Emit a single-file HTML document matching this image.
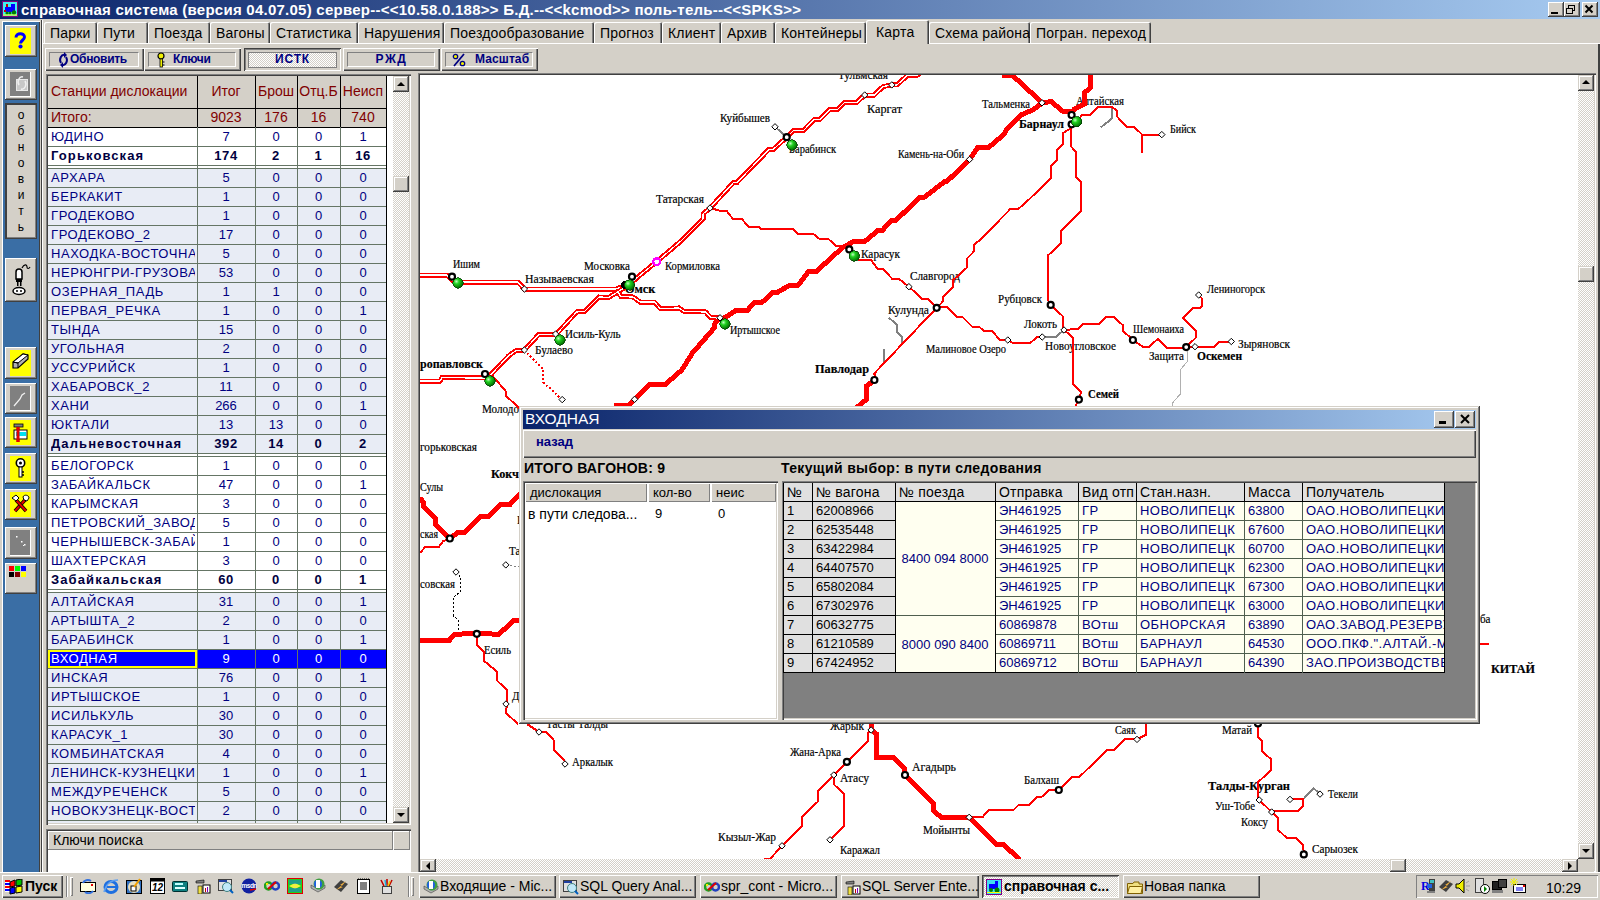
<!DOCTYPE html><html><head><meta charset="utf-8"><style>
html,body{margin:0;padding:0;width:1600px;height:900px;overflow:hidden;background:#D4D0C8;position:relative;font-family:"Liberation Sans",sans-serif;}
div{box-sizing:border-box;}
.t{position:absolute;white-space:nowrap;}
</style></head><body>
<div style="position:absolute;left:0;top:0;width:1600px;height:19px;background:linear-gradient(to right,#0A246A 0%,#A6CAF0 100%);"></div>
<svg style="position:absolute;left:2px;top:1px" width="16" height="16"><rect x="0.5" y="0.5" width="15" height="15" fill="#40F0F0" stroke="#800080"/><rect x="3" y="6" width="8" height="5" fill="#0000FF"/><rect x="9" y="3" width="4" height="8" fill="#0000FF"/><rect x="4" y="3" width="2" height="3" fill="#C00000"/><rect x="2" y="9" width="2" height="2" fill="#C00000"/><circle cx="5" cy="12" r="1.6" fill="#008000"/><circle cx="8" cy="12" r="1.6" fill="#008000"/><circle cx="12" cy="11.5" r="2.2" fill="#008000"/><rect x="1" y="13.5" width="14" height="1" fill="#FFFF00"/></svg>
<div style="position:absolute;left:21px;top:1px;font:bold 15px/17px 'Liberation Sans', sans-serif;color:#FFFFFF;white-space:nowrap;line-height:17px;letter-spacing:0.25px;">справочная система (версия 04.07.05) сервер--&lt;&lt;10.58.0.188&gt;&gt; Б.Д.--&lt;&lt;kcmod&gt;&gt; поль-тель--&lt;&lt;SPKS&gt;&gt;</div>
<div style="position:absolute;left:1548px;top:2px;width:16px;height:15px;background:#D4D0C8;box-shadow:inset -1px -1px #404040, inset 1px 1px #FFFFFF, inset -2px -2px #808080, inset 2px 2px #D4D0C8;"></div>
<div style="position:absolute;left:1564px;top:2px;width:16px;height:15px;background:#D4D0C8;box-shadow:inset -1px -1px #404040, inset 1px 1px #FFFFFF, inset -2px -2px #808080, inset 2px 2px #D4D0C8;"></div>
<div style="position:absolute;left:1582px;top:2px;width:16px;height:15px;background:#D4D0C8;box-shadow:inset -1px -1px #404040, inset 1px 1px #FFFFFF, inset -2px -2px #808080, inset 2px 2px #D4D0C8;"></div>
<svg style="position:absolute;left:1548px;top:2px" width="50" height="15"><rect x="3" y="10" width="7" height="2" fill="#000"/><rect x="20.5" y="3.5" width="6" height="5" fill="none" stroke="#000"/><rect x="20" y="3" width="7" height="1" fill="#000"/><rect x="18.5" y="6.5" width="6" height="5" fill="#D4D0C8" stroke="#000"/><rect x="18" y="6" width="7" height="1" fill="#000"/><path d="M37.5 3.5 L44.5 10.5 M44.5 3.5 L37.5 10.5" stroke="#000" stroke-width="2"/></svg>
<div style="position:absolute;left:0;top:19px;width:1600px;height:1px;background:#D4D0C8"></div>
<div style="position:absolute;left:0;top:20px;width:41px;height:852px;background:#D4D0C8;"></div>
<div style="position:absolute;left:3px;top:22px;width:36px;height:850px;background:#3A6EA5;"></div>
<div style="position:absolute;left:2px;top:21px;width:38px;height:851px;box-shadow:inset 1px 1px #FFFFFF,inset -1px 0 #404040;"></div>
<div style="position:absolute;left:41px;top:20px;width:1px;height:852px;background:#404040;"></div>
<div style="position:absolute;left:42px;top:20px;width:1px;height:852px;background:#FFFFFF;"></div>
<div style="position:absolute;left:5px;top:25px;width:32px;height:32px;background:#D4D0C8;box-shadow:inset -1px -1px #404040, inset 1px 1px #FFFFFF, inset -2px -2px #808080, inset 2px 2px #D4D0C8;"></div>
<div style="position:absolute;left:10px;top:28px;width:21px;height:26px;background:#FFFF00;"></div>
<svg style="position:absolute;left:10px;top:28px" width="22" height="26"><path d="M6 9.5 C6 4.5 14.5 4.5 14.5 9 C14.5 12 10.5 12.5 10.5 15.5" stroke="#0000FF" stroke-width="3" fill="none"/><circle cx="10.5" cy="18.5" r="2.1" fill="#0000FF"/></svg>
<div style="position:absolute;left:5px;top:69px;width:32px;height:31px;background:#D4D0C8;box-shadow:inset -1px -1px #404040, inset 1px 1px #FFFFFF, inset -2px -2px #808080, inset 2px 2px #D4D0C8;"></div>
<div style="position:absolute;left:10px;top:72px;width:21px;height:25px;background:#808080;box-shadow:inset -1px -1px #FFFFFF;"></div>
<svg style="position:absolute;left:15px;top:75px" width="14" height="18"><rect x="1.5" y="4.5" width="11" height="11" fill="#C8C8C8" stroke="#E8E8E8"/><path d="M8 2 A4 5 0 0 0 4 10" stroke="#F0F0F0" stroke-width="1.5" fill="none"/><path d="M6 14 A4 5 0 0 0 10 6" stroke="#F0F0F0" stroke-width="1.5" fill="none"/></svg>
<div style="position:absolute;left:5px;top:103px;width:32px;height:136px;background:#D4D0C8;box-shadow:inset 1px 1px #404040,inset 2px 2px #404040,inset -1px -1px #404040, inset -2px -2px #808080;"></div>
<div class="t" style="left:5px;top:108px;width:32px;text-align:center;font:12px/15px 'Liberation Sans',sans-serif;color:#000">о</div>
<div class="t" style="left:5px;top:124px;width:32px;text-align:center;font:12px/15px 'Liberation Sans',sans-serif;color:#000">б</div>
<div class="t" style="left:5px;top:140px;width:32px;text-align:center;font:12px/15px 'Liberation Sans',sans-serif;color:#000">н</div>
<div class="t" style="left:5px;top:156px;width:32px;text-align:center;font:12px/15px 'Liberation Sans',sans-serif;color:#000">о</div>
<div class="t" style="left:5px;top:172px;width:32px;text-align:center;font:12px/15px 'Liberation Sans',sans-serif;color:#000">в</div>
<div class="t" style="left:5px;top:188px;width:32px;text-align:center;font:12px/15px 'Liberation Sans',sans-serif;color:#000">и</div>
<div class="t" style="left:5px;top:204px;width:32px;text-align:center;font:12px/15px 'Liberation Sans',sans-serif;color:#000">т</div>
<div class="t" style="left:5px;top:220px;width:32px;text-align:center;font:12px/15px 'Liberation Sans',sans-serif;color:#000">ь</div>
<div style="position:absolute;left:5px;top:258px;width:32px;height:44px;background:#D4D0C8;box-shadow:inset -1px -1px #404040, inset 1px 1px #FFFFFF, inset -2px -2px #808080, inset 2px 2px #D4D0C8;"></div>
<svg style="position:absolute;left:10px;top:262px" width="22" height="36"><path d="M12 6 C14 2 17 2 17 5 C17 7 19 7 20 5" stroke="#000" stroke-width="1.2" fill="none"/><path d="M6 17 V10 C6 6 12 6 12 10 V17Z" fill="#fff" stroke="#000" stroke-width="1.5"/><rect x="6" y="17" width="6" height="3" fill="#000"/><rect x="7" y="20" width="1.5" height="4" fill="#000"/><rect x="10" y="20" width="1.5" height="4" fill="#000"/><ellipse cx="9" cy="29" rx="6" ry="3.5" fill="#fff" stroke="#000" stroke-width="1.5"/><circle cx="7" cy="29" r="1" fill="#000"/><circle cx="11" cy="29" r="1" fill="#000"/></svg>
<div style="position:absolute;left:5px;top:347px;width:32px;height:32px;background:#D4D0C8;box-shadow:inset -1px -1px #404040, inset 1px 1px #FFFFFF, inset -2px -2px #808080, inset 2px 2px #D4D0C8;"></div>
<div style="position:absolute;left:10px;top:350px;width:21px;height:26px;background:#FFFF00;"></div>
<svg style="position:absolute;left:10px;top:350px" width="22" height="26"><path d="M3 12 L13 4 L18 5 L18 9 L8 18 L3 18Z" fill="#B0B0B0" stroke="#000" stroke-width="1.2"/><path d="M3 12 L13 4 L18 5 L8 13 Z" fill="#fff" stroke="#000" stroke-width="1"/><path d="M3 12 L8 13 L8 18" fill="none" stroke="#000" stroke-width="1"/></svg>
<div style="position:absolute;left:5px;top:383px;width:32px;height:31px;background:#D4D0C8;box-shadow:inset -1px -1px #404040, inset 1px 1px #FFFFFF, inset -2px -2px #808080, inset 2px 2px #D4D0C8;"></div>
<div style="position:absolute;left:10px;top:386px;width:21px;height:25px;background:#808080;box-shadow:inset -1px -1px #FFFFFF;"></div>
<svg style="position:absolute;left:10px;top:386px" width="22" height="25"><path d="M4 20 L10 13 L12 9 L15 7" stroke="#F0F0F0" stroke-width="1.3" fill="none"/></svg>
<div style="position:absolute;left:5px;top:417px;width:32px;height:31px;background:#D4D0C8;box-shadow:inset -1px -1px #404040, inset 1px 1px #FFFFFF, inset -2px -2px #808080, inset 2px 2px #D4D0C8;"></div>
<div style="position:absolute;left:10px;top:420px;width:21px;height:25px;background:#FFFF00;"></div>
<svg style="position:absolute;left:10px;top:420px" width="22" height="25"><rect x="4" y="4" width="9" height="3" fill="#808080" stroke="#000" stroke-width="0.8"/><rect x="6.5" y="7" width="3" height="15" fill="#E00000"/><rect x="4" y="10" width="13" height="9" fill="#fff" stroke="#000" stroke-width="1"/><rect x="6" y="12" width="10" height="4" fill="#00E0F0"/><rect x="6.5" y="7" width="3" height="15" fill="#E00000"/></svg>
<div style="position:absolute;left:5px;top:453px;width:32px;height:31px;background:#D4D0C8;box-shadow:inset -1px -1px #404040, inset 1px 1px #FFFFFF, inset -2px -2px #808080, inset 2px 2px #D4D0C8;"></div>
<div style="position:absolute;left:10px;top:456px;width:21px;height:25px;background:#FFFF00;"></div>
<svg style="position:absolute;left:10px;top:457px" width="22" height="24"><circle cx="10.5" cy="6" r="4.2" fill="#fff" stroke="#000" stroke-width="1.6"/><circle cx="10.5" cy="6" r="1.5" fill="#000"/><rect x="9" y="10" width="3" height="10" fill="#fff" stroke="#000" stroke-width="1"/><path d="M12 15 H14 M12 18 H14" stroke="#000" stroke-width="1.5"/></svg>
<div style="position:absolute;left:5px;top:489px;width:32px;height:31px;background:#D4D0C8;box-shadow:inset -1px -1px #404040, inset 1px 1px #FFFFFF, inset -2px -2px #808080, inset 2px 2px #D4D0C8;"></div>
<div style="position:absolute;left:10px;top:492px;width:21px;height:25px;background:#FFFF00;"></div>
<svg style="position:absolute;left:10px;top:492px" width="22" height="25"><path d="M5 19 L15 8" stroke="#000" stroke-width="3.5"/><path d="M5 19 L15 8" stroke="#E00000" stroke-width="2"/><path d="M6 8 L16 19" stroke="#000" stroke-width="3.5"/><path d="M6 8 L16 19" stroke="#E00000" stroke-width="2"/><path d="M2 6 L6 3 L9 6 L6 9Z" fill="#fff" stroke="#000"/><path d="M13 5 C14 2 19 3 19 6 L17 9 L14 8Z" fill="#fff" stroke="#000"/></svg>
<div style="position:absolute;left:5px;top:527px;width:32px;height:32px;background:#D4D0C8;box-shadow:inset -1px -1px #404040, inset 1px 1px #FFFFFF, inset -2px -2px #808080, inset 2px 2px #D4D0C8;"></div>
<div style="position:absolute;left:10px;top:530px;width:21px;height:26px;background:#808080;box-shadow:inset -1px -1px #FFFFFF;"></div>
<svg style="position:absolute;left:10px;top:530px" width="22" height="26"><rect x="6" y="6" width="1.5" height="1.5" fill="#fff"/><rect x="11" y="11" width="1.5" height="1.5" fill="#fff"/><rect x="14" y="14" width="1.5" height="1.5" fill="#fff"/><rect x="13" y="15" width="1" height="1" fill="#fff"/></svg>
<div style="position:absolute;left:5px;top:563px;width:32px;height:31px;background:#D4D0C8;box-shadow:inset -1px -1px #404040, inset 1px 1px #FFFFFF, inset -2px -2px #808080, inset 2px 2px #D4D0C8;"></div>
<svg style="position:absolute;left:9px;top:566px" width="18" height="12"><rect x="0" y="0" width="5" height="5" fill="#FF0000"/><rect x="6" y="0" width="5" height="5" fill="#00FF00"/><rect x="12" y="0" width="5" height="5" fill="#0000FF"/><rect x="0" y="6" width="5" height="5" fill="#000"/><rect x="6" y="6" width="5" height="5" fill="#800000"/><rect x="12" y="6" width="5" height="5" fill="#FFFF00"/></svg>
<div style="position:absolute;left:43px;top:43px;width:1557px;height:1px;background:#FFFFFF;"></div>
<div style="position:absolute;left:44px;top:22px;width:53px;height:21px;background:#D4D0C8;box-shadow:inset 1px 1px #FFFFFF,inset -1px 0 #404040,inset -2px 0 #808080;border-radius:2px 2px 0 0;"></div>
<div class="t" style="left:50px;top:25px;font-size:14px;line-height:16px;color:#000;letter-spacing:0.2px">Парки</div>
<div style="position:absolute;left:97px;top:22px;width:51px;height:21px;background:#D4D0C8;box-shadow:inset 1px 1px #FFFFFF,inset -1px 0 #404040,inset -2px 0 #808080;border-radius:2px 2px 0 0;"></div>
<div class="t" style="left:103px;top:25px;font-size:14px;line-height:16px;color:#000;letter-spacing:0.2px">Пути</div>
<div style="position:absolute;left:148px;top:22px;width:62px;height:21px;background:#D4D0C8;box-shadow:inset 1px 1px #FFFFFF,inset -1px 0 #404040,inset -2px 0 #808080;border-radius:2px 2px 0 0;"></div>
<div class="t" style="left:154px;top:25px;font-size:14px;line-height:16px;color:#000;letter-spacing:0.2px">Поезда</div>
<div style="position:absolute;left:210px;top:22px;width:60px;height:21px;background:#D4D0C8;box-shadow:inset 1px 1px #FFFFFF,inset -1px 0 #404040,inset -2px 0 #808080;border-radius:2px 2px 0 0;"></div>
<div class="t" style="left:216px;top:25px;font-size:14px;line-height:16px;color:#000;letter-spacing:0.2px">Вагоны</div>
<div style="position:absolute;left:270px;top:22px;width:88px;height:21px;background:#D4D0C8;box-shadow:inset 1px 1px #FFFFFF,inset -1px 0 #404040,inset -2px 0 #808080;border-radius:2px 2px 0 0;"></div>
<div class="t" style="left:276px;top:25px;font-size:14px;line-height:16px;color:#000;letter-spacing:0.2px">Статистика</div>
<div style="position:absolute;left:358px;top:22px;width:86px;height:21px;background:#D4D0C8;box-shadow:inset 1px 1px #FFFFFF,inset -1px 0 #404040,inset -2px 0 #808080;border-radius:2px 2px 0 0;"></div>
<div class="t" style="left:364px;top:25px;font-size:14px;line-height:16px;color:#000;letter-spacing:0.2px">Нарушения</div>
<div style="position:absolute;left:444px;top:22px;width:150px;height:21px;background:#D4D0C8;box-shadow:inset 1px 1px #FFFFFF,inset -1px 0 #404040,inset -2px 0 #808080;border-radius:2px 2px 0 0;"></div>
<div class="t" style="left:450px;top:25px;font-size:14px;line-height:16px;color:#000;letter-spacing:0.2px">Поездообразование</div>
<div style="position:absolute;left:594px;top:22px;width:68px;height:21px;background:#D4D0C8;box-shadow:inset 1px 1px #FFFFFF,inset -1px 0 #404040,inset -2px 0 #808080;border-radius:2px 2px 0 0;"></div>
<div class="t" style="left:600px;top:25px;font-size:14px;line-height:16px;color:#000;letter-spacing:0.2px">Прогноз</div>
<div style="position:absolute;left:662px;top:22px;width:59px;height:21px;background:#D4D0C8;box-shadow:inset 1px 1px #FFFFFF,inset -1px 0 #404040,inset -2px 0 #808080;border-radius:2px 2px 0 0;"></div>
<div class="t" style="left:668px;top:25px;font-size:14px;line-height:16px;color:#000;letter-spacing:0.2px">Клиент</div>
<div style="position:absolute;left:721px;top:22px;width:54px;height:21px;background:#D4D0C8;box-shadow:inset 1px 1px #FFFFFF,inset -1px 0 #404040,inset -2px 0 #808080;border-radius:2px 2px 0 0;"></div>
<div class="t" style="left:727px;top:25px;font-size:14px;line-height:16px;color:#000;letter-spacing:0.2px">Архив</div>
<div style="position:absolute;left:775px;top:22px;width:91px;height:21px;background:#D4D0C8;box-shadow:inset 1px 1px #FFFFFF,inset -1px 0 #404040,inset -2px 0 #808080;border-radius:2px 2px 0 0;"></div>
<div class="t" style="left:781px;top:25px;font-size:14px;line-height:16px;color:#000;letter-spacing:0.2px">Контейнеры</div>
<div style="position:absolute;left:866px;top:20px;width:63px;height:24px;background:#D4D0C8;box-shadow:inset 1px 1px #FFFFFF,inset -1px 0 #404040,inset -2px 0 #808080;border-radius:2px 2px 0 0;"></div>
<div class="t" style="left:876px;top:24px;font-size:14px;line-height:16px;color:#000;letter-spacing:0.2px">Карта</div>
<div style="position:absolute;left:929px;top:22px;width:101px;height:21px;background:#D4D0C8;box-shadow:inset 1px 1px #FFFFFF,inset -1px 0 #404040,inset -2px 0 #808080;border-radius:2px 2px 0 0;"></div>
<div class="t" style="left:935px;top:25px;font-size:14px;line-height:16px;color:#000;letter-spacing:0.2px">Схема района</div>
<div style="position:absolute;left:1030px;top:22px;width:121px;height:21px;background:#D4D0C8;box-shadow:inset 1px 1px #FFFFFF,inset -1px 0 #404040,inset -2px 0 #808080;border-radius:2px 2px 0 0;"></div>
<div class="t" style="left:1036px;top:25px;font-size:14px;line-height:16px;color:#000;letter-spacing:0.2px">Погран. переход</div>
<div style="position:absolute;left:45px;top:48px;width:99px;height:23px;background:#D4D0C8;box-shadow:inset 1px 1px #FFFFFF,inset -1px -1px #404040,inset -2px -2px #808080;"></div>
<div style="position:absolute;left:49px;top:52px;width:90px;height:15px;border:1px solid #808080;border-right-color:#FFFFFF;border-bottom-color:#FFFFFF;"></div>
<div class="t" style="left:70px;top:52px;font:bold 12px/15px 'Liberation Sans',sans-serif;color:#000080;letter-spacing:-0.3px">Обновить</div>
<svg style="position:absolute;left:58px;top:52px" width="11" height="16"><path d="M7 3 A4 5 0 0 0 3 11" stroke="#000080" stroke-width="2" fill="none"/><path d="M6 0 L9 3 L6 6Z" fill="#000080"/><path d="M4 13 A4 5 0 0 0 8 5" stroke="#000080" stroke-width="2" fill="none"/><path d="M5 10 L2 13 L5 16Z" fill="#000080"/></svg>
<div style="position:absolute;left:144px;top:48px;width:97px;height:23px;background:#D4D0C8;box-shadow:inset 1px 1px #FFFFFF,inset -1px -1px #404040,inset -2px -2px #808080;"></div>
<div style="position:absolute;left:148px;top:52px;width:88px;height:15px;border:1px solid #808080;border-right-color:#FFFFFF;border-bottom-color:#FFFFFF;"></div>
<div class="t" style="left:173px;top:52px;font:bold 12px/15px 'Liberation Sans',sans-serif;color:#000080;letter-spacing:-0.3px">Ключи</div>
<svg style="position:absolute;left:156px;top:52px" width="10" height="16"><circle cx="5" cy="4" r="3" fill="#F0F000" stroke="#000" stroke-width="1.2"/><rect x="4" y="7" width="2.5" height="8" fill="#F0F000" stroke="#000" stroke-width="0.8"/><path d="M6.5 10 H8.5 M6.5 13 H8.5" stroke="#000" stroke-width="1.2"/></svg>
<div style="position:absolute;left:244px;top:48px;width:97px;height:23px;background:#D4D0C8;box-shadow:inset 1px 1px #404040,inset -1px -1px #FFFFFF,inset 2px 2px #808080;"></div>
<div style="position:absolute;left:248px;top:52px;width:89px;height:16px;background:repeating-conic-gradient(#FFFFFF 0% 25%, #D4D0C8 0% 50%) 0 0/2px 2px;border:1px solid #808080;"></div>
<div class="t" style="left:244px;top:52px;width:97px;text-align:center;font:bold 12px/15px 'Liberation Sans',sans-serif;color:#000080;letter-spacing:0.8px">ИСТК</div>
<div style="position:absolute;left:343px;top:48px;width:97px;height:23px;background:#D4D0C8;box-shadow:inset 1px 1px #FFFFFF,inset -1px -1px #404040,inset -2px -2px #808080;"></div>
<div style="position:absolute;left:347px;top:52px;width:88px;height:15px;border:1px solid #808080;border-right-color:#FFFFFF;border-bottom-color:#FFFFFF;"></div>
<div class="t" style="left:343px;top:52px;width:97px;text-align:center;font:bold 12px/15px 'Liberation Sans',sans-serif;color:#000080;letter-spacing:1.6px">РЖД</div>
<div style="position:absolute;left:441px;top:48px;width:97px;height:23px;background:#D4D0C8;box-shadow:inset 1px 1px #FFFFFF,inset -1px -1px #404040,inset -2px -2px #808080;"></div>
<div style="position:absolute;left:445px;top:52px;width:88px;height:15px;border:1px solid #808080;border-right-color:#FFFFFF;border-bottom-color:#FFFFFF;"></div>
<div class="t" style="left:475px;top:52px;font:bold 12px/15px 'Liberation Sans',sans-serif;color:#000080;letter-spacing:0.1px">Масштаб</div>
<svg style="position:absolute;left:452px;top:53px" width="14" height="14"><path d="M12 1 L2 13" stroke="#000080" stroke-width="1.8"/><circle cx="3.5" cy="3.5" r="2.2" fill="#F0F000" stroke="#000080" stroke-width="1.3"/><circle cx="10.5" cy="10.5" r="2.2" fill="#F0F000" stroke="#000080" stroke-width="1.3"/></svg>
<div style="position:absolute;left:46px;top:74px;width:365px;height:751px;background:#FFFFFF;box-shadow:inset 1px 1px #808080,inset 2px 2px #404040,inset -1px -1px #FFFFFF,inset -2px -2px #D4D0C8;"></div>
<div style="position:absolute;left:48px;top:76px;width:338px;height:51px;background:#D4D0C8;"></div>
<div class="t" style="left:51px;top:83px;font-size:14px;line-height:17px;color:#800000">Станции дислокации</div>
<div class="t" style="left:51px;top:109px;font-size:14px;line-height:17px;color:#800000">Итого:</div>
<div class="t" style="left:197px;top:83px;width:58px;text-align:center;font-size:14px;line-height:17px;color:#800000">Итог</div>
<div class="t" style="left:197px;top:109px;width:58px;text-align:center;font-size:14px;line-height:17px;color:#800000">9023</div>
<div class="t" style="left:255px;top:83px;width:42px;text-align:center;font-size:14px;line-height:17px;color:#800000">Брош</div>
<div class="t" style="left:255px;top:109px;width:42px;text-align:center;font-size:14px;line-height:17px;color:#800000">176</div>
<div class="t" style="left:297px;top:83px;width:43px;text-align:center;font-size:14px;line-height:17px;color:#800000">Отц.Б</div>
<div class="t" style="left:297px;top:109px;width:43px;text-align:center;font-size:14px;line-height:17px;color:#800000">16</div>
<div class="t" style="left:340px;top:83px;width:46px;text-align:center;font-size:14px;line-height:17px;color:#800000">Неисп</div>
<div class="t" style="left:340px;top:109px;width:46px;text-align:center;font-size:14px;line-height:17px;color:#800000">740</div>
<div style="position:absolute;left:48px;top:127px;width:338px;height:19px;background:#FFFFFF;border-top:1px solid #657565;"></div>
<div class="t" style="left:51px;top:129px;width:144px;overflow:hidden;font:normal 13px/16px 'Liberation Sans',sans-serif;color:#000080;letter-spacing:0.6px;">ЮДИНО</div>
<div class="t" style="left:197px;top:129px;width:58px;text-align:center;font:normal 13px/16px 'Liberation Sans',sans-serif;color:#000080;">7</div>
<div class="t" style="left:255px;top:129px;width:42px;text-align:center;font:normal 13px/16px 'Liberation Sans',sans-serif;color:#000080;">0</div>
<div class="t" style="left:297px;top:129px;width:43px;text-align:center;font:normal 13px/16px 'Liberation Sans',sans-serif;color:#000080;">0</div>
<div class="t" style="left:340px;top:129px;width:46px;text-align:center;font:normal 13px/16px 'Liberation Sans',sans-serif;color:#000080;">1</div>
<div style="position:absolute;left:48px;top:146px;width:338px;height:19px;background:#FFFFFF;border-top:1px solid #657565;"></div>
<div class="t" style="left:51px;top:148px;width:144px;overflow:hidden;font:bold 13px/16px 'Liberation Sans',sans-serif;color:#000040;letter-spacing:1.1px;">Горьковская</div>
<div class="t" style="left:197px;top:148px;width:58px;text-align:center;font:bold 13px/16px 'Liberation Sans',sans-serif;color:#000040;letter-spacing:0.6px;">174</div>
<div class="t" style="left:255px;top:148px;width:42px;text-align:center;font:bold 13px/16px 'Liberation Sans',sans-serif;color:#000040;letter-spacing:0.6px;">2</div>
<div class="t" style="left:297px;top:148px;width:43px;text-align:center;font:bold 13px/16px 'Liberation Sans',sans-serif;color:#000040;letter-spacing:0.6px;">1</div>
<div class="t" style="left:340px;top:148px;width:46px;text-align:center;font:bold 13px/16px 'Liberation Sans',sans-serif;color:#000040;letter-spacing:0.6px;">16</div>
<div style="position:absolute;left:48px;top:165px;width:338px;height:3px;background:#FFFFFF;border-top:1px solid #657565;"></div>
<div style="position:absolute;left:48px;top:168px;width:338px;height:19px;background:#E8ECF5;border-top:1px solid #657565;"></div>
<div class="t" style="left:51px;top:170px;width:144px;overflow:hidden;font:normal 13px/16px 'Liberation Sans',sans-serif;color:#000080;letter-spacing:0.6px;">АРХАРА</div>
<div class="t" style="left:197px;top:170px;width:58px;text-align:center;font:normal 13px/16px 'Liberation Sans',sans-serif;color:#000080;">5</div>
<div class="t" style="left:255px;top:170px;width:42px;text-align:center;font:normal 13px/16px 'Liberation Sans',sans-serif;color:#000080;">0</div>
<div class="t" style="left:297px;top:170px;width:43px;text-align:center;font:normal 13px/16px 'Liberation Sans',sans-serif;color:#000080;">0</div>
<div class="t" style="left:340px;top:170px;width:46px;text-align:center;font:normal 13px/16px 'Liberation Sans',sans-serif;color:#000080;">0</div>
<div style="position:absolute;left:48px;top:187px;width:338px;height:19px;background:#E8ECF5;border-top:1px solid #657565;"></div>
<div class="t" style="left:51px;top:189px;width:144px;overflow:hidden;font:normal 13px/16px 'Liberation Sans',sans-serif;color:#000080;letter-spacing:0.6px;">БЕРКАКИТ</div>
<div class="t" style="left:197px;top:189px;width:58px;text-align:center;font:normal 13px/16px 'Liberation Sans',sans-serif;color:#000080;">1</div>
<div class="t" style="left:255px;top:189px;width:42px;text-align:center;font:normal 13px/16px 'Liberation Sans',sans-serif;color:#000080;">0</div>
<div class="t" style="left:297px;top:189px;width:43px;text-align:center;font:normal 13px/16px 'Liberation Sans',sans-serif;color:#000080;">0</div>
<div class="t" style="left:340px;top:189px;width:46px;text-align:center;font:normal 13px/16px 'Liberation Sans',sans-serif;color:#000080;">0</div>
<div style="position:absolute;left:48px;top:206px;width:338px;height:19px;background:#E8ECF5;border-top:1px solid #657565;"></div>
<div class="t" style="left:51px;top:208px;width:144px;overflow:hidden;font:normal 13px/16px 'Liberation Sans',sans-serif;color:#000080;letter-spacing:0.6px;">ГРОДЕКОВО</div>
<div class="t" style="left:197px;top:208px;width:58px;text-align:center;font:normal 13px/16px 'Liberation Sans',sans-serif;color:#000080;">1</div>
<div class="t" style="left:255px;top:208px;width:42px;text-align:center;font:normal 13px/16px 'Liberation Sans',sans-serif;color:#000080;">0</div>
<div class="t" style="left:297px;top:208px;width:43px;text-align:center;font:normal 13px/16px 'Liberation Sans',sans-serif;color:#000080;">0</div>
<div class="t" style="left:340px;top:208px;width:46px;text-align:center;font:normal 13px/16px 'Liberation Sans',sans-serif;color:#000080;">0</div>
<div style="position:absolute;left:48px;top:225px;width:338px;height:19px;background:#E8ECF5;border-top:1px solid #657565;"></div>
<div class="t" style="left:51px;top:227px;width:144px;overflow:hidden;font:normal 13px/16px 'Liberation Sans',sans-serif;color:#000080;letter-spacing:0.6px;">ГРОДЕКОВО_2</div>
<div class="t" style="left:197px;top:227px;width:58px;text-align:center;font:normal 13px/16px 'Liberation Sans',sans-serif;color:#000080;">17</div>
<div class="t" style="left:255px;top:227px;width:42px;text-align:center;font:normal 13px/16px 'Liberation Sans',sans-serif;color:#000080;">0</div>
<div class="t" style="left:297px;top:227px;width:43px;text-align:center;font:normal 13px/16px 'Liberation Sans',sans-serif;color:#000080;">0</div>
<div class="t" style="left:340px;top:227px;width:46px;text-align:center;font:normal 13px/16px 'Liberation Sans',sans-serif;color:#000080;">0</div>
<div style="position:absolute;left:48px;top:244px;width:338px;height:19px;background:#E8ECF5;border-top:1px solid #657565;"></div>
<div class="t" style="left:51px;top:246px;width:144px;overflow:hidden;font:normal 13px/16px 'Liberation Sans',sans-serif;color:#000080;letter-spacing:0.6px;">НАХОДКА-ВОСТОЧНАЯ</div>
<div class="t" style="left:197px;top:246px;width:58px;text-align:center;font:normal 13px/16px 'Liberation Sans',sans-serif;color:#000080;">5</div>
<div class="t" style="left:255px;top:246px;width:42px;text-align:center;font:normal 13px/16px 'Liberation Sans',sans-serif;color:#000080;">0</div>
<div class="t" style="left:297px;top:246px;width:43px;text-align:center;font:normal 13px/16px 'Liberation Sans',sans-serif;color:#000080;">0</div>
<div class="t" style="left:340px;top:246px;width:46px;text-align:center;font:normal 13px/16px 'Liberation Sans',sans-serif;color:#000080;">0</div>
<div style="position:absolute;left:48px;top:263px;width:338px;height:19px;background:#E8ECF5;border-top:1px solid #657565;"></div>
<div class="t" style="left:51px;top:265px;width:144px;overflow:hidden;font:normal 13px/16px 'Liberation Sans',sans-serif;color:#000080;letter-spacing:0.6px;">НЕРЮНГРИ-ГРУЗОВАЯ</div>
<div class="t" style="left:197px;top:265px;width:58px;text-align:center;font:normal 13px/16px 'Liberation Sans',sans-serif;color:#000080;">53</div>
<div class="t" style="left:255px;top:265px;width:42px;text-align:center;font:normal 13px/16px 'Liberation Sans',sans-serif;color:#000080;">0</div>
<div class="t" style="left:297px;top:265px;width:43px;text-align:center;font:normal 13px/16px 'Liberation Sans',sans-serif;color:#000080;">0</div>
<div class="t" style="left:340px;top:265px;width:46px;text-align:center;font:normal 13px/16px 'Liberation Sans',sans-serif;color:#000080;">0</div>
<div style="position:absolute;left:48px;top:282px;width:338px;height:19px;background:#E8ECF5;border-top:1px solid #657565;"></div>
<div class="t" style="left:51px;top:284px;width:144px;overflow:hidden;font:normal 13px/16px 'Liberation Sans',sans-serif;color:#000080;letter-spacing:0.6px;">ОЗЕРНАЯ_ПАДЬ</div>
<div class="t" style="left:197px;top:284px;width:58px;text-align:center;font:normal 13px/16px 'Liberation Sans',sans-serif;color:#000080;">1</div>
<div class="t" style="left:255px;top:284px;width:42px;text-align:center;font:normal 13px/16px 'Liberation Sans',sans-serif;color:#000080;">1</div>
<div class="t" style="left:297px;top:284px;width:43px;text-align:center;font:normal 13px/16px 'Liberation Sans',sans-serif;color:#000080;">0</div>
<div class="t" style="left:340px;top:284px;width:46px;text-align:center;font:normal 13px/16px 'Liberation Sans',sans-serif;color:#000080;">0</div>
<div style="position:absolute;left:48px;top:301px;width:338px;height:19px;background:#E8ECF5;border-top:1px solid #657565;"></div>
<div class="t" style="left:51px;top:303px;width:144px;overflow:hidden;font:normal 13px/16px 'Liberation Sans',sans-serif;color:#000080;letter-spacing:0.6px;">ПЕРВАЯ_РЕЧКА</div>
<div class="t" style="left:197px;top:303px;width:58px;text-align:center;font:normal 13px/16px 'Liberation Sans',sans-serif;color:#000080;">1</div>
<div class="t" style="left:255px;top:303px;width:42px;text-align:center;font:normal 13px/16px 'Liberation Sans',sans-serif;color:#000080;">0</div>
<div class="t" style="left:297px;top:303px;width:43px;text-align:center;font:normal 13px/16px 'Liberation Sans',sans-serif;color:#000080;">0</div>
<div class="t" style="left:340px;top:303px;width:46px;text-align:center;font:normal 13px/16px 'Liberation Sans',sans-serif;color:#000080;">1</div>
<div style="position:absolute;left:48px;top:320px;width:338px;height:19px;background:#E8ECF5;border-top:1px solid #657565;"></div>
<div class="t" style="left:51px;top:322px;width:144px;overflow:hidden;font:normal 13px/16px 'Liberation Sans',sans-serif;color:#000080;letter-spacing:0.6px;">ТЫНДА</div>
<div class="t" style="left:197px;top:322px;width:58px;text-align:center;font:normal 13px/16px 'Liberation Sans',sans-serif;color:#000080;">15</div>
<div class="t" style="left:255px;top:322px;width:42px;text-align:center;font:normal 13px/16px 'Liberation Sans',sans-serif;color:#000080;">0</div>
<div class="t" style="left:297px;top:322px;width:43px;text-align:center;font:normal 13px/16px 'Liberation Sans',sans-serif;color:#000080;">0</div>
<div class="t" style="left:340px;top:322px;width:46px;text-align:center;font:normal 13px/16px 'Liberation Sans',sans-serif;color:#000080;">0</div>
<div style="position:absolute;left:48px;top:339px;width:338px;height:19px;background:#E8ECF5;border-top:1px solid #657565;"></div>
<div class="t" style="left:51px;top:341px;width:144px;overflow:hidden;font:normal 13px/16px 'Liberation Sans',sans-serif;color:#000080;letter-spacing:0.6px;">УГОЛЬНАЯ</div>
<div class="t" style="left:197px;top:341px;width:58px;text-align:center;font:normal 13px/16px 'Liberation Sans',sans-serif;color:#000080;">2</div>
<div class="t" style="left:255px;top:341px;width:42px;text-align:center;font:normal 13px/16px 'Liberation Sans',sans-serif;color:#000080;">0</div>
<div class="t" style="left:297px;top:341px;width:43px;text-align:center;font:normal 13px/16px 'Liberation Sans',sans-serif;color:#000080;">0</div>
<div class="t" style="left:340px;top:341px;width:46px;text-align:center;font:normal 13px/16px 'Liberation Sans',sans-serif;color:#000080;">0</div>
<div style="position:absolute;left:48px;top:358px;width:338px;height:19px;background:#E8ECF5;border-top:1px solid #657565;"></div>
<div class="t" style="left:51px;top:360px;width:144px;overflow:hidden;font:normal 13px/16px 'Liberation Sans',sans-serif;color:#000080;letter-spacing:0.6px;">УССУРИЙСК</div>
<div class="t" style="left:197px;top:360px;width:58px;text-align:center;font:normal 13px/16px 'Liberation Sans',sans-serif;color:#000080;">1</div>
<div class="t" style="left:255px;top:360px;width:42px;text-align:center;font:normal 13px/16px 'Liberation Sans',sans-serif;color:#000080;">0</div>
<div class="t" style="left:297px;top:360px;width:43px;text-align:center;font:normal 13px/16px 'Liberation Sans',sans-serif;color:#000080;">0</div>
<div class="t" style="left:340px;top:360px;width:46px;text-align:center;font:normal 13px/16px 'Liberation Sans',sans-serif;color:#000080;">0</div>
<div style="position:absolute;left:48px;top:377px;width:338px;height:19px;background:#E8ECF5;border-top:1px solid #657565;"></div>
<div class="t" style="left:51px;top:379px;width:144px;overflow:hidden;font:normal 13px/16px 'Liberation Sans',sans-serif;color:#000080;letter-spacing:0.6px;">ХАБАРОВСК_2</div>
<div class="t" style="left:197px;top:379px;width:58px;text-align:center;font:normal 13px/16px 'Liberation Sans',sans-serif;color:#000080;">11</div>
<div class="t" style="left:255px;top:379px;width:42px;text-align:center;font:normal 13px/16px 'Liberation Sans',sans-serif;color:#000080;">0</div>
<div class="t" style="left:297px;top:379px;width:43px;text-align:center;font:normal 13px/16px 'Liberation Sans',sans-serif;color:#000080;">0</div>
<div class="t" style="left:340px;top:379px;width:46px;text-align:center;font:normal 13px/16px 'Liberation Sans',sans-serif;color:#000080;">0</div>
<div style="position:absolute;left:48px;top:396px;width:338px;height:19px;background:#E8ECF5;border-top:1px solid #657565;"></div>
<div class="t" style="left:51px;top:398px;width:144px;overflow:hidden;font:normal 13px/16px 'Liberation Sans',sans-serif;color:#000080;letter-spacing:0.6px;">ХАНИ</div>
<div class="t" style="left:197px;top:398px;width:58px;text-align:center;font:normal 13px/16px 'Liberation Sans',sans-serif;color:#000080;">266</div>
<div class="t" style="left:255px;top:398px;width:42px;text-align:center;font:normal 13px/16px 'Liberation Sans',sans-serif;color:#000080;">0</div>
<div class="t" style="left:297px;top:398px;width:43px;text-align:center;font:normal 13px/16px 'Liberation Sans',sans-serif;color:#000080;">0</div>
<div class="t" style="left:340px;top:398px;width:46px;text-align:center;font:normal 13px/16px 'Liberation Sans',sans-serif;color:#000080;">1</div>
<div style="position:absolute;left:48px;top:415px;width:338px;height:19px;background:#E8ECF5;border-top:1px solid #657565;"></div>
<div class="t" style="left:51px;top:417px;width:144px;overflow:hidden;font:normal 13px/16px 'Liberation Sans',sans-serif;color:#000080;letter-spacing:0.6px;">ЮКТАЛИ</div>
<div class="t" style="left:197px;top:417px;width:58px;text-align:center;font:normal 13px/16px 'Liberation Sans',sans-serif;color:#000080;">13</div>
<div class="t" style="left:255px;top:417px;width:42px;text-align:center;font:normal 13px/16px 'Liberation Sans',sans-serif;color:#000080;">13</div>
<div class="t" style="left:297px;top:417px;width:43px;text-align:center;font:normal 13px/16px 'Liberation Sans',sans-serif;color:#000080;">0</div>
<div class="t" style="left:340px;top:417px;width:46px;text-align:center;font:normal 13px/16px 'Liberation Sans',sans-serif;color:#000080;">0</div>
<div style="position:absolute;left:48px;top:434px;width:338px;height:19px;background:#E8ECF5;border-top:1px solid #657565;"></div>
<div class="t" style="left:51px;top:436px;width:144px;overflow:hidden;font:bold 13px/16px 'Liberation Sans',sans-serif;color:#000040;letter-spacing:1.1px;">Дальневосточная</div>
<div class="t" style="left:197px;top:436px;width:58px;text-align:center;font:bold 13px/16px 'Liberation Sans',sans-serif;color:#000040;letter-spacing:0.6px;">392</div>
<div class="t" style="left:255px;top:436px;width:42px;text-align:center;font:bold 13px/16px 'Liberation Sans',sans-serif;color:#000040;letter-spacing:0.6px;">14</div>
<div class="t" style="left:297px;top:436px;width:43px;text-align:center;font:bold 13px/16px 'Liberation Sans',sans-serif;color:#000040;letter-spacing:0.6px;">0</div>
<div class="t" style="left:340px;top:436px;width:46px;text-align:center;font:bold 13px/16px 'Liberation Sans',sans-serif;color:#000040;letter-spacing:0.6px;">2</div>
<div style="position:absolute;left:48px;top:453px;width:338px;height:3px;background:#FFFFFF;border-top:1px solid #657565;"></div>
<div style="position:absolute;left:48px;top:456px;width:338px;height:19px;background:#FFFFFF;border-top:1px solid #657565;"></div>
<div class="t" style="left:51px;top:458px;width:144px;overflow:hidden;font:normal 13px/16px 'Liberation Sans',sans-serif;color:#000080;letter-spacing:0.6px;">БЕЛОГОРСК</div>
<div class="t" style="left:197px;top:458px;width:58px;text-align:center;font:normal 13px/16px 'Liberation Sans',sans-serif;color:#000080;">1</div>
<div class="t" style="left:255px;top:458px;width:42px;text-align:center;font:normal 13px/16px 'Liberation Sans',sans-serif;color:#000080;">0</div>
<div class="t" style="left:297px;top:458px;width:43px;text-align:center;font:normal 13px/16px 'Liberation Sans',sans-serif;color:#000080;">0</div>
<div class="t" style="left:340px;top:458px;width:46px;text-align:center;font:normal 13px/16px 'Liberation Sans',sans-serif;color:#000080;">0</div>
<div style="position:absolute;left:48px;top:475px;width:338px;height:19px;background:#FFFFFF;border-top:1px solid #657565;"></div>
<div class="t" style="left:51px;top:477px;width:144px;overflow:hidden;font:normal 13px/16px 'Liberation Sans',sans-serif;color:#000080;letter-spacing:0.6px;">ЗАБАЙКАЛЬСК</div>
<div class="t" style="left:197px;top:477px;width:58px;text-align:center;font:normal 13px/16px 'Liberation Sans',sans-serif;color:#000080;">47</div>
<div class="t" style="left:255px;top:477px;width:42px;text-align:center;font:normal 13px/16px 'Liberation Sans',sans-serif;color:#000080;">0</div>
<div class="t" style="left:297px;top:477px;width:43px;text-align:center;font:normal 13px/16px 'Liberation Sans',sans-serif;color:#000080;">0</div>
<div class="t" style="left:340px;top:477px;width:46px;text-align:center;font:normal 13px/16px 'Liberation Sans',sans-serif;color:#000080;">1</div>
<div style="position:absolute;left:48px;top:494px;width:338px;height:19px;background:#FFFFFF;border-top:1px solid #657565;"></div>
<div class="t" style="left:51px;top:496px;width:144px;overflow:hidden;font:normal 13px/16px 'Liberation Sans',sans-serif;color:#000080;letter-spacing:0.6px;">КАРЫМСКАЯ</div>
<div class="t" style="left:197px;top:496px;width:58px;text-align:center;font:normal 13px/16px 'Liberation Sans',sans-serif;color:#000080;">3</div>
<div class="t" style="left:255px;top:496px;width:42px;text-align:center;font:normal 13px/16px 'Liberation Sans',sans-serif;color:#000080;">0</div>
<div class="t" style="left:297px;top:496px;width:43px;text-align:center;font:normal 13px/16px 'Liberation Sans',sans-serif;color:#000080;">0</div>
<div class="t" style="left:340px;top:496px;width:46px;text-align:center;font:normal 13px/16px 'Liberation Sans',sans-serif;color:#000080;">0</div>
<div style="position:absolute;left:48px;top:513px;width:338px;height:19px;background:#FFFFFF;border-top:1px solid #657565;"></div>
<div class="t" style="left:51px;top:515px;width:144px;overflow:hidden;font:normal 13px/16px 'Liberation Sans',sans-serif;color:#000080;letter-spacing:0.6px;">ПЕТРОВСКИЙ_ЗАВОД</div>
<div class="t" style="left:197px;top:515px;width:58px;text-align:center;font:normal 13px/16px 'Liberation Sans',sans-serif;color:#000080;">5</div>
<div class="t" style="left:255px;top:515px;width:42px;text-align:center;font:normal 13px/16px 'Liberation Sans',sans-serif;color:#000080;">0</div>
<div class="t" style="left:297px;top:515px;width:43px;text-align:center;font:normal 13px/16px 'Liberation Sans',sans-serif;color:#000080;">0</div>
<div class="t" style="left:340px;top:515px;width:46px;text-align:center;font:normal 13px/16px 'Liberation Sans',sans-serif;color:#000080;">0</div>
<div style="position:absolute;left:48px;top:532px;width:338px;height:19px;background:#FFFFFF;border-top:1px solid #657565;"></div>
<div class="t" style="left:51px;top:534px;width:144px;overflow:hidden;font:normal 13px/16px 'Liberation Sans',sans-serif;color:#000080;letter-spacing:0.6px;">ЧЕРНЫШЕВСК-ЗАБАЙКАЛЬСКИЙ</div>
<div class="t" style="left:197px;top:534px;width:58px;text-align:center;font:normal 13px/16px 'Liberation Sans',sans-serif;color:#000080;">1</div>
<div class="t" style="left:255px;top:534px;width:42px;text-align:center;font:normal 13px/16px 'Liberation Sans',sans-serif;color:#000080;">0</div>
<div class="t" style="left:297px;top:534px;width:43px;text-align:center;font:normal 13px/16px 'Liberation Sans',sans-serif;color:#000080;">0</div>
<div class="t" style="left:340px;top:534px;width:46px;text-align:center;font:normal 13px/16px 'Liberation Sans',sans-serif;color:#000080;">0</div>
<div style="position:absolute;left:48px;top:551px;width:338px;height:19px;background:#FFFFFF;border-top:1px solid #657565;"></div>
<div class="t" style="left:51px;top:553px;width:144px;overflow:hidden;font:normal 13px/16px 'Liberation Sans',sans-serif;color:#000080;letter-spacing:0.6px;">ШАХТЕРСКАЯ</div>
<div class="t" style="left:197px;top:553px;width:58px;text-align:center;font:normal 13px/16px 'Liberation Sans',sans-serif;color:#000080;">3</div>
<div class="t" style="left:255px;top:553px;width:42px;text-align:center;font:normal 13px/16px 'Liberation Sans',sans-serif;color:#000080;">0</div>
<div class="t" style="left:297px;top:553px;width:43px;text-align:center;font:normal 13px/16px 'Liberation Sans',sans-serif;color:#000080;">0</div>
<div class="t" style="left:340px;top:553px;width:46px;text-align:center;font:normal 13px/16px 'Liberation Sans',sans-serif;color:#000080;">0</div>
<div style="position:absolute;left:48px;top:570px;width:338px;height:19px;background:#FFFFFF;border-top:1px solid #657565;"></div>
<div class="t" style="left:51px;top:572px;width:144px;overflow:hidden;font:bold 13px/16px 'Liberation Sans',sans-serif;color:#000040;letter-spacing:1.1px;">Забайкальская</div>
<div class="t" style="left:197px;top:572px;width:58px;text-align:center;font:bold 13px/16px 'Liberation Sans',sans-serif;color:#000040;letter-spacing:0.6px;">60</div>
<div class="t" style="left:255px;top:572px;width:42px;text-align:center;font:bold 13px/16px 'Liberation Sans',sans-serif;color:#000040;letter-spacing:0.6px;">0</div>
<div class="t" style="left:297px;top:572px;width:43px;text-align:center;font:bold 13px/16px 'Liberation Sans',sans-serif;color:#000040;letter-spacing:0.6px;">0</div>
<div class="t" style="left:340px;top:572px;width:46px;text-align:center;font:bold 13px/16px 'Liberation Sans',sans-serif;color:#000040;letter-spacing:0.6px;">1</div>
<div style="position:absolute;left:48px;top:589px;width:338px;height:3px;background:#FFFFFF;border-top:1px solid #657565;"></div>
<div style="position:absolute;left:48px;top:592px;width:338px;height:19px;background:#E8ECF5;border-top:1px solid #657565;"></div>
<div class="t" style="left:51px;top:594px;width:144px;overflow:hidden;font:normal 13px/16px 'Liberation Sans',sans-serif;color:#000080;letter-spacing:0.6px;">АЛТАЙСКАЯ</div>
<div class="t" style="left:197px;top:594px;width:58px;text-align:center;font:normal 13px/16px 'Liberation Sans',sans-serif;color:#000080;">31</div>
<div class="t" style="left:255px;top:594px;width:42px;text-align:center;font:normal 13px/16px 'Liberation Sans',sans-serif;color:#000080;">0</div>
<div class="t" style="left:297px;top:594px;width:43px;text-align:center;font:normal 13px/16px 'Liberation Sans',sans-serif;color:#000080;">0</div>
<div class="t" style="left:340px;top:594px;width:46px;text-align:center;font:normal 13px/16px 'Liberation Sans',sans-serif;color:#000080;">1</div>
<div style="position:absolute;left:48px;top:611px;width:338px;height:19px;background:#E8ECF5;border-top:1px solid #657565;"></div>
<div class="t" style="left:51px;top:613px;width:144px;overflow:hidden;font:normal 13px/16px 'Liberation Sans',sans-serif;color:#000080;letter-spacing:0.6px;">АРТЫШТА_2</div>
<div class="t" style="left:197px;top:613px;width:58px;text-align:center;font:normal 13px/16px 'Liberation Sans',sans-serif;color:#000080;">2</div>
<div class="t" style="left:255px;top:613px;width:42px;text-align:center;font:normal 13px/16px 'Liberation Sans',sans-serif;color:#000080;">0</div>
<div class="t" style="left:297px;top:613px;width:43px;text-align:center;font:normal 13px/16px 'Liberation Sans',sans-serif;color:#000080;">0</div>
<div class="t" style="left:340px;top:613px;width:46px;text-align:center;font:normal 13px/16px 'Liberation Sans',sans-serif;color:#000080;">0</div>
<div style="position:absolute;left:48px;top:630px;width:338px;height:19px;background:#E8ECF5;border-top:1px solid #657565;"></div>
<div class="t" style="left:51px;top:632px;width:144px;overflow:hidden;font:normal 13px/16px 'Liberation Sans',sans-serif;color:#000080;letter-spacing:0.6px;">БАРАБИНСК</div>
<div class="t" style="left:197px;top:632px;width:58px;text-align:center;font:normal 13px/16px 'Liberation Sans',sans-serif;color:#000080;">1</div>
<div class="t" style="left:255px;top:632px;width:42px;text-align:center;font:normal 13px/16px 'Liberation Sans',sans-serif;color:#000080;">0</div>
<div class="t" style="left:297px;top:632px;width:43px;text-align:center;font:normal 13px/16px 'Liberation Sans',sans-serif;color:#000080;">0</div>
<div class="t" style="left:340px;top:632px;width:46px;text-align:center;font:normal 13px/16px 'Liberation Sans',sans-serif;color:#000080;">1</div>
<div style="position:absolute;left:48px;top:649px;width:338px;height:19px;background:#0000FF;border-top:1px solid #657565;"></div>
<div class="t" style="left:51px;top:651px;width:144px;overflow:hidden;font:normal 13px/16px 'Liberation Sans',sans-serif;color:#FFFFFF;letter-spacing:0.6px;">ВХОДНАЯ</div>
<div class="t" style="left:197px;top:651px;width:58px;text-align:center;font:normal 13px/16px 'Liberation Sans',sans-serif;color:#FFFFFF;">9</div>
<div class="t" style="left:255px;top:651px;width:42px;text-align:center;font:normal 13px/16px 'Liberation Sans',sans-serif;color:#FFFFFF;">0</div>
<div class="t" style="left:297px;top:651px;width:43px;text-align:center;font:normal 13px/16px 'Liberation Sans',sans-serif;color:#FFFFFF;">0</div>
<div class="t" style="left:340px;top:651px;width:46px;text-align:center;font:normal 13px/16px 'Liberation Sans',sans-serif;color:#FFFFFF;">0</div>
<div style="position:absolute;left:48px;top:650px;width:149px;height:18px;border:2px solid #FFFF00;"></div>
<div style="position:absolute;left:48px;top:668px;width:338px;height:19px;background:#E8ECF5;border-top:1px solid #657565;"></div>
<div class="t" style="left:51px;top:670px;width:144px;overflow:hidden;font:normal 13px/16px 'Liberation Sans',sans-serif;color:#000080;letter-spacing:0.6px;">ИНСКАЯ</div>
<div class="t" style="left:197px;top:670px;width:58px;text-align:center;font:normal 13px/16px 'Liberation Sans',sans-serif;color:#000080;">76</div>
<div class="t" style="left:255px;top:670px;width:42px;text-align:center;font:normal 13px/16px 'Liberation Sans',sans-serif;color:#000080;">0</div>
<div class="t" style="left:297px;top:670px;width:43px;text-align:center;font:normal 13px/16px 'Liberation Sans',sans-serif;color:#000080;">0</div>
<div class="t" style="left:340px;top:670px;width:46px;text-align:center;font:normal 13px/16px 'Liberation Sans',sans-serif;color:#000080;">1</div>
<div style="position:absolute;left:48px;top:687px;width:338px;height:19px;background:#E8ECF5;border-top:1px solid #657565;"></div>
<div class="t" style="left:51px;top:689px;width:144px;overflow:hidden;font:normal 13px/16px 'Liberation Sans',sans-serif;color:#000080;letter-spacing:0.6px;">ИРТЫШСКОЕ</div>
<div class="t" style="left:197px;top:689px;width:58px;text-align:center;font:normal 13px/16px 'Liberation Sans',sans-serif;color:#000080;">1</div>
<div class="t" style="left:255px;top:689px;width:42px;text-align:center;font:normal 13px/16px 'Liberation Sans',sans-serif;color:#000080;">0</div>
<div class="t" style="left:297px;top:689px;width:43px;text-align:center;font:normal 13px/16px 'Liberation Sans',sans-serif;color:#000080;">0</div>
<div class="t" style="left:340px;top:689px;width:46px;text-align:center;font:normal 13px/16px 'Liberation Sans',sans-serif;color:#000080;">0</div>
<div style="position:absolute;left:48px;top:706px;width:338px;height:19px;background:#E8ECF5;border-top:1px solid #657565;"></div>
<div class="t" style="left:51px;top:708px;width:144px;overflow:hidden;font:normal 13px/16px 'Liberation Sans',sans-serif;color:#000080;letter-spacing:0.6px;">ИСИЛЬКУЛЬ</div>
<div class="t" style="left:197px;top:708px;width:58px;text-align:center;font:normal 13px/16px 'Liberation Sans',sans-serif;color:#000080;">30</div>
<div class="t" style="left:255px;top:708px;width:42px;text-align:center;font:normal 13px/16px 'Liberation Sans',sans-serif;color:#000080;">0</div>
<div class="t" style="left:297px;top:708px;width:43px;text-align:center;font:normal 13px/16px 'Liberation Sans',sans-serif;color:#000080;">0</div>
<div class="t" style="left:340px;top:708px;width:46px;text-align:center;font:normal 13px/16px 'Liberation Sans',sans-serif;color:#000080;">0</div>
<div style="position:absolute;left:48px;top:725px;width:338px;height:19px;background:#E8ECF5;border-top:1px solid #657565;"></div>
<div class="t" style="left:51px;top:727px;width:144px;overflow:hidden;font:normal 13px/16px 'Liberation Sans',sans-serif;color:#000080;letter-spacing:0.6px;">КАРАСУК_1</div>
<div class="t" style="left:197px;top:727px;width:58px;text-align:center;font:normal 13px/16px 'Liberation Sans',sans-serif;color:#000080;">30</div>
<div class="t" style="left:255px;top:727px;width:42px;text-align:center;font:normal 13px/16px 'Liberation Sans',sans-serif;color:#000080;">0</div>
<div class="t" style="left:297px;top:727px;width:43px;text-align:center;font:normal 13px/16px 'Liberation Sans',sans-serif;color:#000080;">0</div>
<div class="t" style="left:340px;top:727px;width:46px;text-align:center;font:normal 13px/16px 'Liberation Sans',sans-serif;color:#000080;">0</div>
<div style="position:absolute;left:48px;top:744px;width:338px;height:19px;background:#E8ECF5;border-top:1px solid #657565;"></div>
<div class="t" style="left:51px;top:746px;width:144px;overflow:hidden;font:normal 13px/16px 'Liberation Sans',sans-serif;color:#000080;letter-spacing:0.6px;">КОМБИНАТСКАЯ</div>
<div class="t" style="left:197px;top:746px;width:58px;text-align:center;font:normal 13px/16px 'Liberation Sans',sans-serif;color:#000080;">4</div>
<div class="t" style="left:255px;top:746px;width:42px;text-align:center;font:normal 13px/16px 'Liberation Sans',sans-serif;color:#000080;">0</div>
<div class="t" style="left:297px;top:746px;width:43px;text-align:center;font:normal 13px/16px 'Liberation Sans',sans-serif;color:#000080;">0</div>
<div class="t" style="left:340px;top:746px;width:46px;text-align:center;font:normal 13px/16px 'Liberation Sans',sans-serif;color:#000080;">0</div>
<div style="position:absolute;left:48px;top:763px;width:338px;height:19px;background:#E8ECF5;border-top:1px solid #657565;"></div>
<div class="t" style="left:51px;top:765px;width:144px;overflow:hidden;font:normal 13px/16px 'Liberation Sans',sans-serif;color:#000080;letter-spacing:0.6px;">ЛЕНИНСК-КУЗНЕЦКИЙ</div>
<div class="t" style="left:197px;top:765px;width:58px;text-align:center;font:normal 13px/16px 'Liberation Sans',sans-serif;color:#000080;">1</div>
<div class="t" style="left:255px;top:765px;width:42px;text-align:center;font:normal 13px/16px 'Liberation Sans',sans-serif;color:#000080;">0</div>
<div class="t" style="left:297px;top:765px;width:43px;text-align:center;font:normal 13px/16px 'Liberation Sans',sans-serif;color:#000080;">0</div>
<div class="t" style="left:340px;top:765px;width:46px;text-align:center;font:normal 13px/16px 'Liberation Sans',sans-serif;color:#000080;">1</div>
<div style="position:absolute;left:48px;top:782px;width:338px;height:19px;background:#E8ECF5;border-top:1px solid #657565;"></div>
<div class="t" style="left:51px;top:784px;width:144px;overflow:hidden;font:normal 13px/16px 'Liberation Sans',sans-serif;color:#000080;letter-spacing:0.6px;">МЕЖДУРЕЧЕНСК</div>
<div class="t" style="left:197px;top:784px;width:58px;text-align:center;font:normal 13px/16px 'Liberation Sans',sans-serif;color:#000080;">5</div>
<div class="t" style="left:255px;top:784px;width:42px;text-align:center;font:normal 13px/16px 'Liberation Sans',sans-serif;color:#000080;">0</div>
<div class="t" style="left:297px;top:784px;width:43px;text-align:center;font:normal 13px/16px 'Liberation Sans',sans-serif;color:#000080;">0</div>
<div class="t" style="left:340px;top:784px;width:46px;text-align:center;font:normal 13px/16px 'Liberation Sans',sans-serif;color:#000080;">0</div>
<div style="position:absolute;left:48px;top:801px;width:338px;height:19px;background:#E8ECF5;border-top:1px solid #657565;"></div>
<div class="t" style="left:51px;top:803px;width:144px;overflow:hidden;font:normal 13px/16px 'Liberation Sans',sans-serif;color:#000080;letter-spacing:0.6px;">НОВОКУЗНЕЦК-ВОСТОЧНЫЙ</div>
<div class="t" style="left:197px;top:803px;width:58px;text-align:center;font:normal 13px/16px 'Liberation Sans',sans-serif;color:#000080;">2</div>
<div class="t" style="left:255px;top:803px;width:42px;text-align:center;font:normal 13px/16px 'Liberation Sans',sans-serif;color:#000080;">0</div>
<div class="t" style="left:297px;top:803px;width:43px;text-align:center;font:normal 13px/16px 'Liberation Sans',sans-serif;color:#000080;">0</div>
<div class="t" style="left:340px;top:803px;width:46px;text-align:center;font:normal 13px/16px 'Liberation Sans',sans-serif;color:#000080;">0</div>
<div style="position:absolute;left:48px;top:820px;width:338px;height:3px;background:#E8ECF5;border-top:1px solid #657565;"></div>
<div style="position:absolute;left:48px;top:108px;width:338px;height:1px;background:#000;"></div>
<div style="position:absolute;left:48px;top:127px;width:338px;height:1px;background:#000;"></div>
<div style="position:absolute;left:197px;top:76px;width:1px;height:51px;background:#000;"></div>
<div style="position:absolute;left:197px;top:127px;width:1px;height:696px;background:#657565;"></div>
<div style="position:absolute;left:255px;top:76px;width:1px;height:51px;background:#000;"></div>
<div style="position:absolute;left:255px;top:127px;width:1px;height:696px;background:#657565;"></div>
<div style="position:absolute;left:297px;top:76px;width:1px;height:51px;background:#000;"></div>
<div style="position:absolute;left:297px;top:127px;width:1px;height:696px;background:#657565;"></div>
<div style="position:absolute;left:340px;top:76px;width:1px;height:51px;background:#000;"></div>
<div style="position:absolute;left:340px;top:127px;width:1px;height:696px;background:#657565;"></div>
<div style="position:absolute;left:386px;top:76px;width:1px;height:51px;background:#000;"></div>
<div style="position:absolute;left:386px;top:127px;width:1px;height:696px;background:#000;"></div>
<div style="position:absolute;left:393px;top:76px;width:16px;height:747px;background:repeating-conic-gradient(#FFFFFF 0% 25%, #D4D0C8 0% 50%) 0 0/2px 2px;"></div>
<div style="position:absolute;left:393px;top:76px;width:16px;height:16px;background:#D4D0C8;box-shadow:inset -1px -1px #404040, inset 1px 1px #D4D0C8, inset -2px -2px #808080, inset 2px 2px #FFFFFF;"></div>
<div style="position:absolute;left:397px;top:82px;width:0;height:0;border-left:4px solid transparent;border-right:4px solid transparent;border-bottom:4px solid #000;"></div>
<div style="position:absolute;left:393px;top:176px;width:16px;height:16px;background:#D4D0C8;box-shadow:inset -1px -1px #404040, inset 1px 1px #D4D0C8, inset -2px -2px #808080, inset 2px 2px #FFFFFF;"></div>
<div style="position:absolute;left:393px;top:807px;width:16px;height:16px;background:#D4D0C8;box-shadow:inset -1px -1px #404040, inset 1px 1px #D4D0C8, inset -2px -2px #808080, inset 2px 2px #FFFFFF;"></div>
<div style="position:absolute;left:397px;top:813px;width:0;height:0;border-left:4px solid transparent;border-right:4px solid transparent;border-top:4px solid #000;"></div>
<div style="position:absolute;left:46px;top:829px;width:365px;height:43px;background:#FFFFFF;box-shadow:inset 1px 1px #808080,inset 2px 2px #404040;"></div>
<div style="position:absolute;left:48px;top:831px;width:362px;height:19px;background:#D4D0C8;box-shadow:inset -1px -1px #808080,inset 1px 1px #FFFFFF;"></div>
<div style="position:absolute;left:392px;top:831px;width:1px;height:19px;background:#808080;"></div><div style="position:absolute;left:393px;top:831px;width:1px;height:19px;background:#FFFFFF;"></div>
<div class="t" style="left:53px;top:832px;font-size:14px;line-height:17px;color:#000">Ключи поиска</div>
<div style="position:absolute;left:418px;top:73px;width:1178px;height:799px;background:#D4D0C8;box-shadow:inset 1px 1px #808080,inset 2px 2px #404040,inset -1px -1px #FFFFFF;"></div>
<div style="position:absolute;left:420px;top:75px;width:1158px;height:784px;background:#FFFFFF;overflow:hidden;" id="map">
<div class="t" style="left:418px;top:-7px;font:normal 13px/14px 'Liberation Serif',serif;color:#000;transform:scaleX(0.8693289866883999);transform-origin:0 0;-webkit-text-stroke:0.2px #000">Тульмская</div>
<div class="t" style="left:447px;top:27px;font:normal 13px/14px 'Liberation Serif',serif;color:#000;transform:scaleX(0.9403862300587741);transform-origin:0 0;-webkit-text-stroke:0.2px #000">Каргат</div>
<div class="t" style="left:300px;top:36px;font:normal 13px/14px 'Liberation Serif',serif;color:#000;transform:scaleX(0.8558438085049479);transform-origin:0 0;-webkit-text-stroke:0.2px #000">Куйбышев</div>
<div class="t" style="left:369px;top:67px;font:normal 13px/14px 'Liberation Serif',serif;color:#000;transform:scaleX(0.8086021505376344);transform-origin:0 0;-webkit-text-stroke:0.2px #000">Барабинск</div>
<div class="t" style="left:562px;top:22px;font:normal 13px/14px 'Liberation Serif',serif;color:#000;transform:scaleX(0.8168040414783302);transform-origin:0 0;-webkit-text-stroke:0.2px #000">Тальменка</div>
<div class="t" style="left:656px;top:19px;font:normal 13px/14px 'Liberation Serif',serif;color:#000;transform:scaleX(0.8262506724045185);transform-origin:0 0;-webkit-text-stroke:0.2px #000">Алтайская</div>
<div class="t" style="left:599px;top:42px;font:bold 13px/14px 'Liberation Serif',serif;color:#000;transform:scaleX(0.916030534351145);transform-origin:0 0;-webkit-text-stroke:0.2px #000">Барнаул</div>
<div class="t" style="left:750px;top:47px;font:normal 13px/14px 'Liberation Serif',serif;color:#000;transform:scaleX(0.776844070961718);transform-origin:0 0;-webkit-text-stroke:0.2px #000">Бийск</div>
<div class="t" style="left:478px;top:72px;font:normal 13px/14px 'Liberation Serif',serif;color:#000;transform:scaleX(0.7719298245614035);transform-origin:0 0;-webkit-text-stroke:0.2px #000">Камень-на-Оби</div>
<div class="t" style="left:236px;top:117px;font:normal 13px/14px 'Liberation Serif',serif;color:#000;transform:scaleX(0.8757126567844926);transform-origin:0 0;-webkit-text-stroke:0.2px #000">Татарская</div>
<div class="t" style="left:33px;top:182px;font:normal 13px/14px 'Liberation Serif',serif;color:#000;transform:scaleX(0.7804878048780488);transform-origin:0 0;-webkit-text-stroke:0.2px #000">Ишим</div>
<div class="t" style="left:164px;top:184px;font:normal 13px/14px 'Liberation Serif',serif;color:#000;transform:scaleX(0.8516054382412497);transform-origin:0 0;-webkit-text-stroke:0.2px #000">Московка</div>
<div class="t" style="left:245px;top:184px;font:normal 13px/14px 'Liberation Serif',serif;color:#000;transform:scaleX(0.8205128205128205);transform-origin:0 0;-webkit-text-stroke:0.2px #000">Кормиловка</div>
<div class="t" style="left:105px;top:197px;font:normal 13px/14px 'Liberation Serif',serif;color:#000;transform:scaleX(0.9049180327868852);transform-origin:0 0;-webkit-text-stroke:0.2px #000">Называевская</div>
<div class="t" style="left:205px;top:207px;font:bold 13px/14px 'Liberation Serif',serif;color:#000;transform:scaleX(0.94);transform-origin:0 0;-webkit-text-stroke:0.2px #000">Омск</div>
<div class="t" style="left:441px;top:172px;font:normal 13px/14px 'Liberation Serif',serif;color:#000;transform:scaleX(0.8672689367616401);transform-origin:0 0;-webkit-text-stroke:0.2px #000">Карасук</div>
<div class="t" style="left:490px;top:194px;font:normal 13px/14px 'Liberation Serif',serif;color:#000;transform:scaleX(0.8646311807619562);transform-origin:0 0;-webkit-text-stroke:0.2px #000">Славгород</div>
<div class="t" style="left:787px;top:207px;font:normal 13px/14px 'Liberation Serif',serif;color:#000;transform:scaleX(0.8059053408597482);transform-origin:0 0;-webkit-text-stroke:0.2px #000">Лениногорск</div>
<div class="t" style="left:578px;top:217px;font:normal 13px/14px 'Liberation Serif',serif;color:#000;transform:scaleX(0.8497284248642124);transform-origin:0 0;-webkit-text-stroke:0.2px #000">Рубцовск</div>
<div class="t" style="left:468px;top:228px;font:normal 13px/14px 'Liberation Serif',serif;color:#000;transform:scaleX(0.8922135328119687);transform-origin:0 0;-webkit-text-stroke:0.2px #000">Кулунда</div>
<div class="t" style="left:145px;top:252px;font:normal 13px/14px 'Liberation Serif',serif;color:#000;transform:scaleX(0.8550794415021666);transform-origin:0 0;-webkit-text-stroke:0.2px #000">Исиль-Куль</div>
<div class="t" style="left:310px;top:248px;font:normal 13px/14px 'Liberation Serif',serif;color:#000;transform:scaleX(0.78125);transform-origin:0 0;-webkit-text-stroke:0.2px #000">Иртышское</div>
<div class="t" style="left:604px;top:242px;font:normal 13px/14px 'Liberation Serif',serif;color:#000;transform:scaleX(0.8550607287449393);transform-origin:0 0;-webkit-text-stroke:0.2px #000">Локоть</div>
<div class="t" style="left:713px;top:247px;font:normal 13px/14px 'Liberation Serif',serif;color:#000;transform:scaleX(0.7797419971333015);transform-origin:0 0;-webkit-text-stroke:0.2px #000">Шемонаиха</div>
<div class="t" style="left:818px;top:262px;font:normal 13px/14px 'Liberation Serif',serif;color:#000;transform:scaleX(0.8762506582411795);transform-origin:0 0;-webkit-text-stroke:0.2px #000">Зыряновск</div>
<div class="t" style="left:115px;top:268px;font:normal 13px/14px 'Liberation Serif',serif;color:#000;transform:scaleX(0.870436649964209);transform-origin:0 0;-webkit-text-stroke:0.2px #000">Булаево</div>
<div class="t" style="left:506px;top:267px;font:normal 13px/14px 'Liberation Serif',serif;color:#000;transform:scaleX(0.8050314465408805);transform-origin:0 0;-webkit-text-stroke:0.2px #000">Малиновое Озеро</div>
<div class="t" style="left:625px;top:264px;font:normal 13px/14px 'Liberation Serif',serif;color:#000;transform:scaleX(0.8655238095238095);transform-origin:0 0;-webkit-text-stroke:0.2px #000">Новоугловское</div>
<div class="t" style="left:729px;top:274px;font:normal 13px/14px 'Liberation Serif',serif;color:#000;transform:scaleX(0.8562691131498471);transform-origin:0 0;-webkit-text-stroke:0.2px #000">Защита</div>
<div class="t" style="left:777px;top:274px;font:bold 13px/14px 'Liberation Serif',serif;color:#000;transform:scaleX(0.8834355828220859);transform-origin:0 0;-webkit-text-stroke:0.2px #000">Оскемен</div>
<div class="t" style="left:395px;top:287px;font:bold 13px/14px 'Liberation Serif',serif;color:#000;transform:scaleX(0.9442622950819672);transform-origin:0 0;-webkit-text-stroke:0.2px #000">Павлодар</div>
<div class="t" style="left:0px;top:282px;font:bold 13px/14px 'Liberation Serif',serif;color:#000;transform:scaleX(0.919917864476386);transform-origin:0 0;-webkit-text-stroke:0.2px #000">ропавловск</div>
<div class="t" style="left:668px;top:312px;font:bold 13px/14px 'Liberation Serif',serif;color:#000;transform:scaleX(0.8280467445742905);transform-origin:0 0;-webkit-text-stroke:0.2px #000">Семей</div>
<div class="t" style="left:62px;top:327px;font:normal 13px/14px 'Liberation Serif',serif;color:#000;transform:scaleX(0.8545651389390112);transform-origin:0 0;-webkit-text-stroke:0.2px #000">Молодо</div>
<div class="t" style="left:0px;top:365px;font:normal 13px/14px 'Liberation Serif',serif;color:#000;transform:scaleX(0.8663025409641415);transform-origin:0 0;-webkit-text-stroke:0.2px #000">горьковская</div>
<div class="t" style="left:71px;top:392px;font:bold 13px/14px 'Liberation Serif',serif;color:#000;transform:scaleX(0.94);transform-origin:0 0;-webkit-text-stroke:0.2px #000">Кокч</div>
<div class="t" style="left:0px;top:405px;font:normal 13px/14px 'Liberation Serif',serif;color:#000;transform:scaleX(0.7796610169491526);transform-origin:0 0;-webkit-text-stroke:0.2px #000">Сулы</div>
<div class="t" style="left:0px;top:452px;font:normal 13px/14px 'Liberation Serif',serif;color:#000;transform:scaleX(0.7614011896893589);transform-origin:0 0;-webkit-text-stroke:0.2px #000">ская</div>
<div class="t" style="left:97px;top:438px;font:normal 13px/14px 'Liberation Serif',serif;color:#000;transform:scaleX(0.85);transform-origin:0 0;-webkit-text-stroke:0.2px #000">Р</div>
<div class="t" style="left:89px;top:469px;font:normal 13px/14px 'Liberation Serif',serif;color:#000;transform:scaleX(0.85);transform-origin:0 0;-webkit-text-stroke:0.2px #000">Та</div>
<div class="t" style="left:0px;top:502px;font:normal 13px/14px 'Liberation Serif',serif;color:#000;transform:scaleX(0.8336434685522888);transform-origin:0 0;-webkit-text-stroke:0.2px #000">совская</div>
<div class="t" style="left:64px;top:568px;font:normal 13px/14px 'Liberation Serif',serif;color:#000;transform:scaleX(0.8158640226628895);transform-origin:0 0;-webkit-text-stroke:0.2px #000">Есиль</div>
<div class="t" style="left:92px;top:614px;font:normal 13px/14px 'Liberation Serif',serif;color:#000;transform:scaleX(0.85);transform-origin:0 0;-webkit-text-stroke:0.2px #000">Д</div>
<div class="t" style="left:126px;top:642px;font:normal 13px/14px 'Liberation Serif',serif;color:#000;transform:scaleX(0.8590604026845637);transform-origin:0 0;-webkit-text-stroke:0.2px #000">Тасты Талды</div>
<div class="t" style="left:152px;top:680px;font:normal 13px/14px 'Liberation Serif',serif;color:#000;transform:scaleX(0.8293299620733249);transform-origin:0 0;-webkit-text-stroke:0.2px #000">Аркалык</div>
<div class="t" style="left:410px;top:644px;font:normal 13px/14px 'Liberation Serif',serif;color:#000;transform:scaleX(0.8795472918350848);transform-origin:0 0;-webkit-text-stroke:0.2px #000">Жарык</div>
<div class="t" style="left:370px;top:670px;font:normal 13px/14px 'Liberation Serif',serif;color:#000;transform:scaleX(0.8234106962663976);transform-origin:0 0;-webkit-text-stroke:0.2px #000">Жана-Арка</div>
<div class="t" style="left:420px;top:696px;font:normal 13px/14px 'Liberation Serif',serif;color:#000;transform:scaleX(0.8935965334617236);transform-origin:0 0;-webkit-text-stroke:0.2px #000">Атасу</div>
<div class="t" style="left:492px;top:685px;font:normal 13px/14px 'Liberation Serif',serif;color:#000;transform:scaleX(0.911326860841424);transform-origin:0 0;-webkit-text-stroke:0.2px #000">Агадырь</div>
<div class="t" style="left:503px;top:748px;font:normal 13px/14px 'Liberation Serif',serif;color:#000;transform:scaleX(0.8574686431014823);transform-origin:0 0;-webkit-text-stroke:0.2px #000">Мойынты</div>
<div class="t" style="left:298px;top:755px;font:normal 13px/14px 'Liberation Serif',serif;color:#000;transform:scaleX(0.8829686013320647);transform-origin:0 0;-webkit-text-stroke:0.2px #000">Кызыл-Жар</div>
<div class="t" style="left:420px;top:768px;font:normal 13px/14px 'Liberation Serif',serif;color:#000;transform:scaleX(0.8349641226353555);transform-origin:0 0;-webkit-text-stroke:0.2px #000">Каражал</div>
<div class="t" style="left:695px;top:648px;font:normal 13px/14px 'Liberation Serif',serif;color:#000;transform:scaleX(0.7850467289719626);transform-origin:0 0;-webkit-text-stroke:0.2px #000">Саяк</div>
<div class="t" style="left:604px;top:698px;font:normal 13px/14px 'Liberation Serif',serif;color:#000;transform:scaleX(0.8342644320297952);transform-origin:0 0;-webkit-text-stroke:0.2px #000">Балхаш</div>
<div class="t" style="left:802px;top:648px;font:normal 13px/14px 'Liberation Serif',serif;color:#000;transform:scaleX(0.843585237258348);transform-origin:0 0;-webkit-text-stroke:0.2px #000">Матай</div>
<div class="t" style="left:788px;top:704px;font:bold 13px/14px 'Liberation Serif',serif;color:#000;transform:scaleX(0.9529689486108589);transform-origin:0 0;-webkit-text-stroke:0.2px #000">Талды-Курган</div>
<div class="t" style="left:795px;top:724px;font:normal 13px/14px 'Liberation Serif',serif;color:#000;transform:scaleX(0.831979200519987);transform-origin:0 0;-webkit-text-stroke:0.2px #000">Уш-Тобе</div>
<div class="t" style="left:821px;top:740px;font:normal 13px/14px 'Liberation Serif',serif;color:#000;transform:scaleX(0.8275862068965517);transform-origin:0 0;-webkit-text-stroke:0.2px #000">Коксу</div>
<div class="t" style="left:908px;top:712px;font:normal 13px/14px 'Liberation Serif',serif;color:#000;transform:scaleX(0.7804878048780488);transform-origin:0 0;-webkit-text-stroke:0.2px #000">Текели</div>
<div class="t" style="left:892px;top:767px;font:normal 13px/14px 'Liberation Serif',serif;color:#000;transform:scaleX(0.8613224107665302);transform-origin:0 0;-webkit-text-stroke:0.2px #000">Сарыозек</div>
<div class="t" style="left:1071px;top:587px;font:bold 13px/14px 'Liberation Serif',serif;color:#000;transform:scaleX(0.9349269588313412);transform-origin:0 0;-webkit-text-stroke:0.2px #000">КИТАЙ</div>
<div class="t" style="left:1060px;top:537px;font:normal 13px/14px 'Liberation Serif',serif;color:#000;transform:scaleX(0.85);transform-origin:0 0;-webkit-text-stroke:0.2px #000">ба</div>
<svg style="position:absolute;left:-420px;top:-75px" width="1600" height="900" shape-rendering="crispEdges">
<polyline points="775.0,126.8 786.7,137.2" fill="none" stroke="#808080" stroke-width="2"/>
<polyline points="1112.2,107.2 1112.2,118.3 1101.0,127.2" fill="none" stroke="#808080" stroke-width="2"/>
<polyline points="888.9,317.8 896.7,324.4 896.7,332.2 902.2,336.7 902.2,343.3" fill="none" stroke="#808080" stroke-width="2"/>
<polyline points="884.0,348.9 884.0,363.3" fill="none" stroke="#808080" stroke-width="2"/>
<polyline points="1042.2,337.0 1055.6,337.0 1064.0,330.0" fill="none" stroke="#808080" stroke-width="2"/>
<polyline points="1303.2,799.4 1313.5,788.2 1320.0,794.1" fill="none" stroke="#808080" stroke-width="2"/>
<polyline points="1187.8,347.0 1187.8,361.0 1180.0,370.0 1180.0,394.4 1172.2,403.3 1172.2,410.0" fill="none" stroke="#B0B0B0" stroke-width="1"/>
<polyline points="710.0,208.0 721.0,211.0 726.7,211.0 733.3,219.4 742.2,219.4 748.9,227.2 758.9,227.2 761.0,229.4 793.3,229.4 797.8,233.9 813.3,233.9 820.0,239.4 828.9,239.4 835.6,245.7 840.0,245.7 849.3,249.4" fill="none" stroke="#FF0000" stroke-width="2" stroke-linejoin="miter"/>
<polyline points="853.0,258.0 860.0,260.0 871.0,260.0 877.8,268.9 883.3,268.9 892.2,278.9 898.9,278.9 908.9,286.7 922.2,298.9 927.8,298.9 936.7,307.8 946.7,306.7 956.7,316.7 962.2,316.7 972.2,326.7 978.9,326.7 984.4,331.1 992.2,331.1 1000.0,340.0 1007.8,340.0 1013.3,343.3 1030.0,343.3 1036.7,337.3 1042.2,337.0" fill="none" stroke="#FF0000" stroke-width="2" stroke-linejoin="miter"/>
<polyline points="875.1,380.1 874.4,373.3 936.7,307.8 943.3,301.1 943.3,296.7 953.3,286.7 953.3,280.0 966.7,267.8 966.7,258.9 974.4,251.0 974.4,244.4 980.0,240.0 1010.0,209.4 1017.8,209.4 1027.8,200.6 1051.0,178.3 1051.0,166.0 1056.7,160.6 1056.7,150.6 1063.3,143.9 1063.3,132.8 1071.0,128.3 1071.6,124.3" fill="none" stroke="#FF0000" stroke-width="2" stroke-linejoin="miter"/>
<polyline points="1071.6,124.3 1070.7,146.0 1075.6,151.7 1075.6,177.2 1081.0,181.7 1081.0,210.6 1061.0,230.6 1061.0,243.3 1047.8,255.6 1047.8,300.0 1050.7,304.9 1063.3,316.7 1063.3,327.8 1064.0,330.0 1073.3,337.8 1073.3,384.4 1081.0,392.2 1078.9,399.6 1075.6,406.0" fill="none" stroke="#FF0000" stroke-width="2" stroke-linejoin="miter"/>
<polyline points="1064.0,330.0 1077.8,328.9 1083.3,324.0 1098.9,324.0 1106.7,316.7 1113.3,316.7 1123.3,325.6 1123.3,331.1 1132.9,340.0 1143.3,347.1 1148.9,347.1 1157.8,338.9 1167.8,348.4 1182.2,348.4 1186.2,347.1" fill="none" stroke="#FF0000" stroke-width="2" stroke-linejoin="miter"/>
<polyline points="1198.7,295.0 1202.4,299.0 1202.4,305.3 1200.2,308.4 1192.4,308.4 1183.0,317.8 1195.5,330.2 1195.5,338.0 1186.2,347.1" fill="none" stroke="#FF0000" stroke-width="2" stroke-linejoin="miter"/>
<polyline points="1186.2,347.1 1195.0,346.7 1214.2,346.7 1218.9,341.7 1231.3,341.5" fill="none" stroke="#FF0000" stroke-width="2" stroke-linejoin="miter"/>
<polyline points="1076.7,121.7 1082.0,115.0 1090.0,115.0 1097.8,107.2 1112.2,107.2 1116.7,110.6 1116.7,116.1 1126.7,127.2 1134.4,127.2 1142.2,134.6 1161.8,134.6" fill="none" stroke="#FF0000" stroke-width="2" stroke-linejoin="miter"/>
<polyline points="1142.2,134.6 1142.2,152.8" fill="none" stroke="#FF0000" stroke-width="2" stroke-linejoin="miter"/>
<polyline points="490.0,381.0 493.3,376.7 505.6,391.0 505.6,395.6 517.8,406.7 522.0,410.0" fill="none" stroke="#FF0000" stroke-width="2" stroke-linejoin="miter"/>
<polyline points="420.0,552.8 425.3,547.0 438.7,547.0 443.1,541.2 449.8,538.5" fill="none" stroke="#FF0000" stroke-width="2" stroke-linejoin="miter"/>
<polyline points="476.8,634.0 476.8,644.8 484.0,651.9 484.0,660.8 496.7,671.4 496.7,680.3 507.0,690.0 507.0,704.0 506.0,713.0 518.0,724.0" fill="none" stroke="#FF0000" stroke-width="2" stroke-linejoin="miter"/>
<polyline points="527.0,724.0 539.0,732.0 546.4,732.0 553.6,740.0 553.6,750.0 564.4,760.0 565.0,764.0" fill="none" stroke="#FF0000" stroke-width="2" stroke-linejoin="miter"/>
<polyline points="871.0,730.0 868.0,732.8 868.0,741.3 846.9,761.9 833.8,775.0 818.2,791.0 818.2,801.3 802.3,816.3 802.3,825.7 782.0,845.8 770.4,858.5 763.8,858.5" fill="none" stroke="#FF0000" stroke-width="2" stroke-linejoin="miter"/>
<polyline points="833.8,775.0 833.8,784.4 844.1,793.8 844.1,825.7 830.0,839.8" fill="none" stroke="#FF0000" stroke-width="2" stroke-linejoin="miter"/>
<polyline points="969.2,817.3 982.4,817.3 988.9,809.7 1013.8,809.7 1018.5,805.0 1028.8,805.0 1037.2,796.6 1041.9,796.6 1049.4,790.0 1058.8,790.0 1071.9,776.9 1079.4,776.9 1107.6,749.7 1114.1,749.7 1124.5,739.4 1137.0,739.4 1146.0,734.7 1146.0,722.0" fill="none" stroke="#FF0000" stroke-width="2" stroke-linejoin="miter"/>
<polyline points="1258.0,722.0 1258.0,736.6 1262.4,741.3 1262.4,751.6 1270.8,759.0 1270.8,770.3 1257.7,782.5 1257.7,797.6 1259.2,800.0 1271.7,812.0 1277.6,817.6 1277.6,829.4 1287.0,838.2 1295.9,838.2 1303.2,845.6 1303.8,854.4" fill="none" stroke="#FF0000" stroke-width="2" stroke-linejoin="miter"/>
<polyline points="1271.7,811.2 1297.4,811.2 1303.2,806.0 1303.2,799.4 1290.0,799.4" fill="none" stroke="#FF0000" stroke-width="2" stroke-linejoin="miter"/>
<polyline points="1480.0,644.0 1489.0,644.0" fill="none" stroke="#FF0000" stroke-width="2" stroke-linejoin="miter"/>
<polyline points="614.3,405.0 629.0,405.0 634.6,399.3 649.2,384.6 665.0,384.6 681.9,370.0 692.2,353.3 714.4,327.8 714.4,324.4 717.8,320.0 726.7,316.7 736.7,310.0 747.8,310.0 754.4,302.2 762.2,302.2 773.3,292.2 777.8,292.2 788.9,285.6 797.8,285.6 808.9,271.1 816.7,271.1 842.2,247.8 853.3,241.7 864.4,241.7 877.8,230.6 882.2,230.6 891.0,220.6 895.6,220.6 920.0,197.2 924.4,197.2 944.4,181.7 946.7,181.7 969.6,159.4 977.8,147.2 988.9,147.2 1004.4,133.9 1006.7,129.4 1021.0,115.0 1033.7,109.4 1042.0,103.0" fill="none" stroke="#FF0000" stroke-width="5" stroke-linejoin="miter"/>
<polyline points="1002.0,75.0 1012.6,75.5 1039.0,99.8 1042.0,103.0 1051.2,101.5 1063.3,111.7 1071.0,111.7" fill="none" stroke="#FF0000" stroke-width="5" stroke-linejoin="miter"/>
<polyline points="1090.6,70.0 1090.6,87.5 1084.4,92.8 1084.4,104.2 1074.0,109.4 1071.6,115.0" fill="none" stroke="#FF0000" stroke-width="5" stroke-linejoin="miter"/>
<polyline points="875.1,380.1 866.6,385.8 866.6,399.3 859.8,405.0 855.0,409.0" fill="none" stroke="#FF0000" stroke-width="5" stroke-linejoin="miter"/>
<polyline points="420.0,497.7 423.6,503.0 423.6,506.6 435.1,518.1 435.1,524.3 449.8,538.5 458.2,532.3 464.4,532.3 480.4,516.3 488.4,516.3 499.9,504.8 509.7,504.8 522.0,492.0" fill="none" stroke="#FF0000" stroke-width="5" stroke-linejoin="miter"/>
<polyline points="420.0,640.4 449.3,640.4 454.6,634.1 476.8,633.8 499.0,634.1 514.1,620.3 522.0,620.3" fill="none" stroke="#FF0000" stroke-width="5" stroke-linejoin="miter"/>
<polyline points="871.0,722.0 871.0,730.0 876.4,733.8 876.4,757.2 893.2,757.2 904.5,768.5 905.0,775.0 933.6,803.2 933.6,810.7 941.1,817.3 969.2,817.3 996.9,844.5 1003.5,844.5 1018.5,858.5 1020.0,862.0" fill="none" stroke="#FF0000" stroke-width="5" stroke-linejoin="miter"/>
<polyline points="420.0,275.0 446.7,275.0 453.0,281.0 460.0,282.0 517.8,282.0 524.4,289.0 616.0,289.0 630.0,284.0" fill="none" stroke="#FF0000" stroke-width="5" stroke-linejoin="miter"/>
<polyline points="420.0,275.0 446.7,275.0 453.0,281.0 460.0,282.0 517.8,282.0 524.4,289.0 616.0,289.0 630.0,284.0" fill="none" stroke="#FFFFFF" stroke-width="1.2" stroke-linejoin="miter"/>
<polyline points="630.0,284.0 639.0,276.0 656.7,261.7 681.0,241.0 703.0,219.0 703.0,214.0 710.0,208.0 733.3,182.8 736.7,182.8 768.9,149.4 773.3,149.4 786.7,137.2 793.3,130.6 803.3,130.6 814.4,119.4 820.0,119.4 830.0,109.4 837.5,109.4 844.5,102.4 856.8,102.4 864.7,95.0 874.3,95.0 883.0,86.6 891.8,84.9 897.0,84.9 907.6,75.3 917.2,75.3 925.0,68.0" fill="none" stroke="#FF0000" stroke-width="5" stroke-linejoin="miter"/>
<polyline points="630.0,284.0 639.0,276.0 656.7,261.7 681.0,241.0 703.0,219.0 703.0,214.0 710.0,208.0 733.3,182.8 736.7,182.8 768.9,149.4 773.3,149.4 786.7,137.2 793.3,130.6 803.3,130.6 814.4,119.4 820.0,119.4 830.0,109.4 837.5,109.4 844.5,102.4 856.8,102.4 864.7,95.0 874.3,95.0 883.0,86.6 891.8,84.9 897.0,84.9 907.6,75.3 917.2,75.3 925.0,68.0" fill="none" stroke="#FFFFFF" stroke-width="1.2" stroke-linejoin="miter"/>
<polyline points="630.0,284.0 617.8,292.0 609.0,297.3 599.0,297.0 584.4,311.6 576.7,312.0 555.6,335.0 538.9,334.4 524.4,350.0 515.6,351.0 508.9,355.6 491.0,374.4 485.0,378.0 442.0,377.8 440.0,381.0 420.0,381.0" fill="none" stroke="#FF0000" stroke-width="5" stroke-linejoin="miter"/>
<polyline points="630.0,284.0 617.8,292.0 609.0,297.3 599.0,297.0 584.4,311.6 576.7,312.0 555.6,335.0 538.9,334.4 524.4,350.0 515.6,351.0 508.9,355.6 491.0,374.4 485.0,378.0 442.0,377.8 440.0,381.0 420.0,381.0" fill="none" stroke="#FFFFFF" stroke-width="1.2" stroke-linejoin="miter"/>
<polyline points="617.8,292.0 621.0,296.7 633.0,297.0 640.0,302.0 654.4,302.0 660.0,308.4 678.9,308.0 684.4,311.6 705.6,312.0 711.0,317.8 720.0,318.0" fill="none" stroke="#FF0000" stroke-width="5" stroke-linejoin="miter"/>
<polyline points="617.8,292.0 621.0,296.7 633.0,297.0 640.0,302.0 654.4,302.0 660.0,308.4 678.9,308.0 684.4,311.6 705.6,312.0 711.0,317.8 720.0,318.0" fill="none" stroke="#FFFFFF" stroke-width="1.2" stroke-linejoin="miter"/>
<polyline points="524.4,350.0 543.3,368.9 543.3,382.2 562.2,399.6" fill="none" stroke="#FF0000" stroke-width="2" stroke-dasharray="2,2"/>
<polyline points="456.0,572.0 460.9,577.3 460.9,591.5 453.7,596.8 453.7,616.4 458.2,620.0 458.2,632.4" fill="none" stroke="#000" stroke-width="1" stroke-dasharray="2,2"/>
<polyline points="505.8,564.9 520.0,567.0" fill="none" stroke="#808080" stroke-width="1" stroke-dasharray="2,2"/>
<polygon points="521.1999999999999,289 524.4,285.8 527.6,289 524.4,292.2" fill="#fff" stroke="#000" stroke-width="1" shape-rendering="auto"/>
<polygon points="706.8,208 710,204.8 713.2,208 710,211.2" fill="#fff" stroke="#000" stroke-width="1" shape-rendering="auto"/>
<polygon points="552.4,334 555.6,330.8 558.8000000000001,334 555.6,337.2" fill="#fff" stroke="#000" stroke-width="1" shape-rendering="auto"/>
<polygon points="521.1999999999999,350 524.4,346.8 527.6,350 524.4,353.2" fill="#fff" stroke="#000" stroke-width="1" shape-rendering="auto"/>
<polygon points="559.0,399.6 562.2,396.40000000000003 565.4000000000001,399.6 562.2,402.8" fill="#fff" stroke="#000" stroke-width="1" shape-rendering="auto"/>
<polygon points="631.4,399.3 634.6,396.1 637.8000000000001,399.3 634.6,402.5" fill="#fff" stroke="#000" stroke-width="1" shape-rendering="auto"/>
<polygon points="716.8,317.8 720,314.6 723.2,317.8 720,321.0" fill="#fff" stroke="#000" stroke-width="1" shape-rendering="auto"/>
<polygon points="771.8,126.8 775,123.6 778.2,126.8 775,130.0" fill="#fff" stroke="#000" stroke-width="1" shape-rendering="auto"/>
<polygon points="861.5,95 864.7,91.8 867.9000000000001,95 864.7,98.2" fill="#fff" stroke="#000" stroke-width="1" shape-rendering="auto"/>
<polygon points="888.5999999999999,84.9 891.8,81.7 895.0,84.9 891.8,88.10000000000001" fill="#fff" stroke="#000" stroke-width="1" shape-rendering="auto"/>
<polygon points="966.4,159.4 969.6,156.20000000000002 972.8000000000001,159.4 969.6,162.6" fill="#fff" stroke="#000" stroke-width="1" shape-rendering="auto"/>
<polygon points="1038.8,102.8 1042,99.6 1045.2,102.8 1042,106.0" fill="#fff" stroke="#000" stroke-width="1" shape-rendering="auto"/>
<polygon points="1158.6,134.6 1161.8,131.4 1165.0,134.6 1161.8,137.79999999999998" fill="#fff" stroke="#000" stroke-width="1" shape-rendering="auto"/>
<polygon points="905.6999999999999,286.7 908.9,283.5 912.1,286.7 908.9,289.9" fill="#fff" stroke="#000" stroke-width="1" shape-rendering="auto"/>
<polygon points="1004.5999999999999,340 1007.8,336.8 1011.0,340 1007.8,343.2" fill="#fff" stroke="#000" stroke-width="1" shape-rendering="auto"/>
<polygon points="1039.0,337 1042.2,333.8 1045.4,337 1042.2,340.2" fill="#fff" stroke="#000" stroke-width="1" shape-rendering="auto"/>
<polygon points="1060.8,330 1064,326.8 1067.2,330 1064,333.2" fill="#fff" stroke="#000" stroke-width="1" shape-rendering="auto"/>
<polygon points="1195.5,295 1198.7,291.8 1201.9,295 1198.7,298.2" fill="#fff" stroke="#000" stroke-width="1" shape-rendering="auto"/>
<polygon points="1191.8,346.7 1195,343.5 1198.2,346.7 1195,349.9" fill="#fff" stroke="#000" stroke-width="1" shape-rendering="auto"/>
<polygon points="1228.1,341.5 1231.3,338.3 1234.5,341.5 1231.3,344.7" fill="#fff" stroke="#000" stroke-width="1" shape-rendering="auto"/>
<polygon points="452.8,572 456,568.8 459.2,572 456,575.2" fill="#fff" stroke="#000" stroke-width="1" shape-rendering="auto"/>
<polygon points="502.6,564.9 505.8,561.6999999999999 509.0,564.9 505.8,568.1" fill="#fff" stroke="#000" stroke-width="1" shape-rendering="auto"/>
<polygon points="502.8,704 506,700.8 509.2,704 506,707.2" fill="#fff" stroke="#000" stroke-width="1" shape-rendering="auto"/>
<polygon points="535.8,732 539,728.8 542.2,732 539,735.2" fill="#fff" stroke="#000" stroke-width="1" shape-rendering="auto"/>
<polygon points="561.8,764 565,760.8 568.2,764 565,767.2" fill="#fff" stroke="#000" stroke-width="1" shape-rendering="auto"/>
<polygon points="867.9,730 871.1,726.8 874.3000000000001,730 871.1,733.2" fill="#fff" stroke="#000" stroke-width="1" shape-rendering="auto"/>
<polygon points="830.5999999999999,775 833.8,771.8 837.0,775 833.8,778.2" fill="#fff" stroke="#000" stroke-width="1" shape-rendering="auto"/>
<polygon points="778.8,845.8 782,842.5999999999999 785.2,845.8 782,849.0" fill="#fff" stroke="#000" stroke-width="1" shape-rendering="auto"/>
<polygon points="826.8,839.8 830,836.5999999999999 833.2,839.8 830,843.0" fill="#fff" stroke="#000" stroke-width="1" shape-rendering="auto"/>
<polygon points="966.0,817.3 969.2,814.0999999999999 972.4000000000001,817.3 969.2,820.5" fill="#fff" stroke="#000" stroke-width="1" shape-rendering="auto"/>
<polygon points="1133.8,739.4 1137,736.1999999999999 1140.2,739.4 1137,742.6" fill="#fff" stroke="#000" stroke-width="1" shape-rendering="auto"/>
<polygon points="1256.0,800 1259.2,796.8 1262.4,800 1259.2,803.2" fill="#fff" stroke="#000" stroke-width="1" shape-rendering="auto"/>
<polygon points="1268.5,812 1271.7,808.8 1274.9,812 1271.7,815.2" fill="#fff" stroke="#000" stroke-width="1" shape-rendering="auto"/>
<polygon points="1286.8,799.4 1290,796.1999999999999 1293.2,799.4 1290,802.6" fill="#fff" stroke="#000" stroke-width="1" shape-rendering="auto"/>
<polygon points="1316.8,794.1 1320,790.9 1323.2,794.1 1320,797.3000000000001" fill="#fff" stroke="#000" stroke-width="1" shape-rendering="auto"/>
<circle cx="452" cy="276.7" r="3" fill="#fff" stroke="#000" stroke-width="2.2" shape-rendering="auto"/>
<circle cx="632" cy="276.7" r="3" fill="#fff" stroke="#000" stroke-width="2.2" shape-rendering="auto"/>
<circle cx="786.7" cy="137.2" r="3" fill="#fff" stroke="#000" stroke-width="2.2" shape-rendering="auto"/>
<circle cx="849.3" cy="249.4" r="3" fill="#fff" stroke="#000" stroke-width="2.2" shape-rendering="auto"/>
<circle cx="1071.6" cy="115" r="3" fill="#fff" stroke="#000" stroke-width="2.2" shape-rendering="auto"/>
<circle cx="1071.6" cy="124.3" r="3" fill="#fff" stroke="#000" stroke-width="2.2" shape-rendering="auto"/>
<circle cx="485" cy="374" r="3" fill="#fff" stroke="#000" stroke-width="2.2" shape-rendering="auto"/>
<circle cx="936.7" cy="307.8" r="3" fill="#fff" stroke="#000" stroke-width="2.2" shape-rendering="auto"/>
<circle cx="874.4" cy="380" r="3" fill="#fff" stroke="#000" stroke-width="2.2" shape-rendering="auto"/>
<circle cx="1050.7" cy="304.9" r="3" fill="#fff" stroke="#000" stroke-width="2.2" shape-rendering="auto"/>
<circle cx="1132.9" cy="340" r="3" fill="#fff" stroke="#000" stroke-width="2.2" shape-rendering="auto"/>
<circle cx="1186.2" cy="347.1" r="3" fill="#fff" stroke="#000" stroke-width="2.2" shape-rendering="auto"/>
<circle cx="1078.9" cy="399.6" r="3" fill="#fff" stroke="#000" stroke-width="2.2" shape-rendering="auto"/>
<circle cx="449.8" cy="538.5" r="3" fill="#fff" stroke="#000" stroke-width="2.2" shape-rendering="auto"/>
<circle cx="476.8" cy="633.8" r="3" fill="#fff" stroke="#000" stroke-width="2.2" shape-rendering="auto"/>
<circle cx="846.9" cy="761.9" r="3" fill="#fff" stroke="#000" stroke-width="2.2" shape-rendering="auto"/>
<circle cx="905" cy="775" r="3" fill="#fff" stroke="#000" stroke-width="2.2" shape-rendering="auto"/>
<circle cx="1058.8" cy="790" r="3" fill="#fff" stroke="#000" stroke-width="2.2" shape-rendering="auto"/>
<circle cx="1258" cy="723.4" r="3" fill="#fff" stroke="#000" stroke-width="2.2" shape-rendering="auto"/>
<circle cx="1303.8" cy="854.4" r="3" fill="#fff" stroke="#000" stroke-width="2.2" shape-rendering="auto"/>
<defs><radialGradient id="gb" cx="0.35" cy="0.35" r="0.7"><stop offset="0" stop-color="#C0FFC0"/><stop offset="0.35" stop-color="#20D020"/><stop offset="1" stop-color="#006000"/></radialGradient></defs>
<circle cx="625" cy="285" r="4" fill="#000"/>
<circle cx="458" cy="283" r="5.2" fill="url(#gb)" stroke="#004000" stroke-width="0.8"/>
<circle cx="629.5" cy="285" r="5.2" fill="url(#gb)" stroke="#004000" stroke-width="0.8"/>
<circle cx="560" cy="340" r="5.2" fill="url(#gb)" stroke="#004000" stroke-width="0.8"/>
<circle cx="490" cy="381" r="5.2" fill="url(#gb)" stroke="#004000" stroke-width="0.8"/>
<circle cx="792" cy="145" r="5.2" fill="url(#gb)" stroke="#004000" stroke-width="0.8"/>
<circle cx="854.4" cy="256" r="5.2" fill="url(#gb)" stroke="#004000" stroke-width="0.8"/>
<circle cx="725" cy="324" r="5.2" fill="url(#gb)" stroke="#004000" stroke-width="0.8"/>
<circle cx="1076.7" cy="121.7" r="5.2" fill="url(#gb)" stroke="#004000" stroke-width="0.8"/>
<circle cx="656.7" cy="261.7" r="3.5" fill="#fff" stroke="#FF00FF" stroke-width="2.5"/>
</svg>
</div>
<div style="position:absolute;left:1578px;top:75px;width:16px;height:784px;background:repeating-conic-gradient(#FFFFFF 0% 25%, #D4D0C8 0% 50%) 0 0/2px 2px;"></div>
<div style="position:absolute;left:1578px;top:75px;width:16px;height:16px;background:#D4D0C8;box-shadow:inset -1px -1px #404040, inset 1px 1px #D4D0C8, inset -2px -2px #808080, inset 2px 2px #FFFFFF;"></div>
<div style="position:absolute;left:1582px;top:80px;width:0;height:0;border-left:4px solid transparent;border-right:4px solid transparent;border-bottom:4px solid #000;"></div>
<div style="position:absolute;left:1578px;top:266px;width:16px;height:16px;background:#D4D0C8;box-shadow:inset -1px -1px #404040, inset 1px 1px #D4D0C8, inset -2px -2px #808080, inset 2px 2px #FFFFFF;"></div>
<div style="position:absolute;left:1578px;top:843px;width:16px;height:16px;background:#D4D0C8;box-shadow:inset -1px -1px #404040, inset 1px 1px #D4D0C8, inset -2px -2px #808080, inset 2px 2px #FFFFFF;"></div>
<div style="position:absolute;left:1582px;top:849px;width:0;height:0;border-left:4px solid transparent;border-right:4px solid transparent;border-top:4px solid #000;"></div>
<div style="position:absolute;left:420px;top:859px;width:1158px;height:13px;background:repeating-conic-gradient(#FFFFFF 0% 25%, #D4D0C8 0% 50%) 0 0/2px 2px;"></div>
<div style="position:absolute;left:420px;top:859px;width:16px;height:13px;background:#D4D0C8;box-shadow:inset -1px -1px #404040, inset 1px 1px #D4D0C8, inset -2px -2px #808080, inset 2px 2px #FFFFFF;"></div>
<div style="position:absolute;left:426px;top:862px;width:0;height:0;border-top:4px solid transparent;border-bottom:4px solid transparent;border-right:4px solid #000;"></div>
<div style="position:absolute;left:1390px;top:859px;width:16px;height:13px;background:#D4D0C8;box-shadow:inset -1px -1px #404040, inset 1px 1px #D4D0C8, inset -2px -2px #808080, inset 2px 2px #FFFFFF;"></div>
<div style="position:absolute;left:1562px;top:859px;width:16px;height:13px;background:#D4D0C8;box-shadow:inset -1px -1px #404040, inset 1px 1px #D4D0C8, inset -2px -2px #808080, inset 2px 2px #FFFFFF;"></div>
<div style="position:absolute;left:1568px;top:862px;width:0;height:0;border-top:4px solid transparent;border-bottom:4px solid transparent;border-left:4px solid #000;"></div>
<div style="position:absolute;left:1578px;top:859px;width:16px;height:13px;background:#D4D0C8;"></div>
<div style="position:absolute;left:1598px;top:44px;width:2px;height:828px;background:#404040;"></div>
<div style="position:absolute;left:519px;top:406px;width:961px;height:318px;background:#D4D0C8;box-shadow:inset -1px -1px #404040,inset 1px 1px #D4D0C8,inset -2px -2px #808080,inset 2px 2px #FFFFFF;"></div>
<div style="position:absolute;left:523px;top:410px;width:953px;height:19px;background:linear-gradient(to right,#0A246A 0%,#A6CAF0 100%);"></div>
<div class="t" style="left:525px;top:410px;font-size:15.5px;line-height:18px;color:#FFFFFF">ВХОДНАЯ</div>
<div style="position:absolute;left:1434px;top:411px;width:20px;height:17px;background:#D4D0C8;box-shadow:inset -1px -1px #404040, inset 1px 1px #FFFFFF, inset -2px -2px #808080, inset 2px 2px #D4D0C8;"></div>
<div style="position:absolute;left:1439px;top:421px;width:7px;height:3px;background:#000"></div>
<div style="position:absolute;left:1455px;top:411px;width:20px;height:17px;background:#D4D0C8;box-shadow:inset -1px -1px #404040, inset 1px 1px #FFFFFF, inset -2px -2px #808080, inset 2px 2px #D4D0C8;"></div>
<svg style="position:absolute;left:1455px;top:411px" width="20" height="17"><path d="M6 4 L14 12 M14 4 L6 12" stroke="#000" stroke-width="2"/></svg>
<div style="position:absolute;left:523px;top:430px;width:953px;height:28px;background:#D4D0C8;box-shadow:inset 1px 1px #FFFFFF,inset -1px -1px #404040,inset -2px -2px #808080;"></div>
<div class="t" style="left:536px;top:434px;font:bold 13px/16px 'Liberation Sans',sans-serif;color:#000080">назад</div>
<div class="t" style="left:524px;top:460px;font:bold 14px/16px 'Liberation Sans',sans-serif;color:#000;letter-spacing:0.25px">ИТОГО ВАГОНОВ: 9</div>
<div class="t" style="left:781px;top:460px;font:bold 14px/16px 'Liberation Sans',sans-serif;color:#000;letter-spacing:0.35px">Текущий выбор: в пути следования</div>
<div style="position:absolute;left:523px;top:481px;width:255px;height:239px;background:#FFFFFF;box-shadow:inset 1px 1px #808080,inset 2px 2px #404040,inset -1px -1px #FFFFFF,inset -2px -2px #D4D0C8;"></div>
<div style="position:absolute;left:525px;top:483px;width:122px;height:19px;background:#D4D0C8;box-shadow:inset 1px 1px #FFFFFF,inset -1px -1px #808080;"></div>
<div class="t" style="left:530px;top:485px;font-size:13px;line-height:16px;color:#000">дислокация</div>
<div style="position:absolute;left:648px;top:483px;width:62px;height:19px;background:#D4D0C8;box-shadow:inset 1px 1px #FFFFFF,inset -1px -1px #808080;"></div>
<div class="t" style="left:653px;top:485px;font-size:13px;line-height:16px;color:#000">кол-во</div>
<div style="position:absolute;left:711px;top:483px;width:65px;height:19px;background:#D4D0C8;box-shadow:inset 1px 1px #FFFFFF,inset -1px -1px #808080;"></div>
<div class="t" style="left:716px;top:485px;font-size:13px;line-height:16px;color:#000">неис</div>
<div class="t" style="left:528px;top:506px;font-size:14px;line-height:16px;color:#000">в пути следова...</div>
<div class="t" style="left:655px;top:506px;font-size:13px;line-height:16px;color:#000">9</div>
<div class="t" style="left:718px;top:506px;font-size:13px;line-height:16px;color:#000">0</div>
<div style="position:absolute;left:782px;top:481px;width:695px;height:239px;background:#808080;box-shadow:inset 1px 1px #808080,inset 2px 2px #404040,inset -1px -1px #FFFFFF,inset -2px -2px #D4D0C8;"></div>
<div style="position:absolute;left:784px;top:483px;width:661px;height:19px;background:#E0E0E0;"></div>
<div class="t" style="left:787px;top:484px;font-size:14px;line-height:17px;color:#000;letter-spacing:0.2px">№</div>
<div class="t" style="left:816px;top:484px;font-size:14px;line-height:17px;color:#000;letter-spacing:0.2px">№ вагона</div>
<div class="t" style="left:899px;top:484px;font-size:14px;line-height:17px;color:#000;letter-spacing:0.2px">№ поезда</div>
<div class="t" style="left:999px;top:484px;font-size:14px;line-height:17px;color:#000;letter-spacing:0.2px">Отправка</div>
<div class="t" style="left:1082px;top:484px;font-size:14px;line-height:17px;color:#000;letter-spacing:0.2px">Вид отп</div>
<div class="t" style="left:1140px;top:484px;font-size:14px;line-height:17px;color:#000;letter-spacing:0.2px">Стан.назн.</div>
<div class="t" style="left:1248px;top:484px;font-size:14px;line-height:17px;color:#000;letter-spacing:0.2px">Масса</div>
<div class="t" style="left:1306px;top:484px;font-size:14px;line-height:17px;color:#000;letter-spacing:0.2px">Получатель</div>
<div style="position:absolute;left:784px;top:502px;width:661px;height:171px;background:#FFFFF0;"></div>
<div style="position:absolute;left:784px;top:502px;width:111px;height:171px;background:#E0E0E0;"></div>
<div style="position:absolute;left:784px;top:501px;width:111px;height:1px;background:#000"></div>
<div style="position:absolute;left:995px;top:501px;width:450px;height:1px;background:#4F5F4F"></div>
<div class="t" style="left:787px;top:503px;width:25px;overflow:hidden;font-size:13px;line-height:16px;color:#000;">1</div>
<div class="t" style="left:816px;top:503px;width:79px;overflow:hidden;font-size:13px;line-height:16px;color:#000;">62008966</div>
<div class="t" style="left:999px;top:503px;width:79px;overflow:hidden;font-size:13px;line-height:16px;color:#000080;">ЭН461925</div>
<div class="t" style="left:1082px;top:503px;width:54px;overflow:hidden;font-size:13px;line-height:16px;color:#000080;letter-spacing:0.45px;">ГР</div>
<div class="t" style="left:1140px;top:503px;width:104px;overflow:hidden;font-size:13px;line-height:16px;color:#000080;letter-spacing:0.45px;">НОВОЛИПЕЦК</div>
<div class="t" style="left:1248px;top:503px;width:54px;overflow:hidden;font-size:13px;line-height:16px;color:#000080;">63800</div>
<div class="t" style="left:1306px;top:503px;width:138px;overflow:hidden;font-size:13px;line-height:16px;color:#000080;letter-spacing:0.45px;">ОАО.НОВОЛИПЕЦКИЙ</div>
<div style="position:absolute;left:784px;top:520px;width:111px;height:1px;background:#000"></div>
<div style="position:absolute;left:995px;top:520px;width:450px;height:1px;background:#4F5F4F"></div>
<div class="t" style="left:787px;top:522px;width:25px;overflow:hidden;font-size:13px;line-height:16px;color:#000;">2</div>
<div class="t" style="left:816px;top:522px;width:79px;overflow:hidden;font-size:13px;line-height:16px;color:#000;">62535448</div>
<div class="t" style="left:999px;top:522px;width:79px;overflow:hidden;font-size:13px;line-height:16px;color:#000080;">ЭН461925</div>
<div class="t" style="left:1082px;top:522px;width:54px;overflow:hidden;font-size:13px;line-height:16px;color:#000080;letter-spacing:0.45px;">ГР</div>
<div class="t" style="left:1140px;top:522px;width:104px;overflow:hidden;font-size:13px;line-height:16px;color:#000080;letter-spacing:0.45px;">НОВОЛИПЕЦК</div>
<div class="t" style="left:1248px;top:522px;width:54px;overflow:hidden;font-size:13px;line-height:16px;color:#000080;">67600</div>
<div class="t" style="left:1306px;top:522px;width:138px;overflow:hidden;font-size:13px;line-height:16px;color:#000080;letter-spacing:0.45px;">ОАО.НОВОЛИПЕЦКИЙ</div>
<div style="position:absolute;left:784px;top:539px;width:111px;height:1px;background:#000"></div>
<div style="position:absolute;left:995px;top:539px;width:450px;height:1px;background:#4F5F4F"></div>
<div class="t" style="left:787px;top:541px;width:25px;overflow:hidden;font-size:13px;line-height:16px;color:#000;">3</div>
<div class="t" style="left:816px;top:541px;width:79px;overflow:hidden;font-size:13px;line-height:16px;color:#000;">63422984</div>
<div class="t" style="left:999px;top:541px;width:79px;overflow:hidden;font-size:13px;line-height:16px;color:#000080;">ЭН461925</div>
<div class="t" style="left:1082px;top:541px;width:54px;overflow:hidden;font-size:13px;line-height:16px;color:#000080;letter-spacing:0.45px;">ГР</div>
<div class="t" style="left:1140px;top:541px;width:104px;overflow:hidden;font-size:13px;line-height:16px;color:#000080;letter-spacing:0.45px;">НОВОЛИПЕЦК</div>
<div class="t" style="left:1248px;top:541px;width:54px;overflow:hidden;font-size:13px;line-height:16px;color:#000080;">60700</div>
<div class="t" style="left:1306px;top:541px;width:138px;overflow:hidden;font-size:13px;line-height:16px;color:#000080;letter-spacing:0.45px;">ОАО.НОВОЛИПЕЦКИЙ</div>
<div style="position:absolute;left:784px;top:558px;width:111px;height:1px;background:#000"></div>
<div style="position:absolute;left:995px;top:558px;width:450px;height:1px;background:#4F5F4F"></div>
<div class="t" style="left:787px;top:560px;width:25px;overflow:hidden;font-size:13px;line-height:16px;color:#000;">4</div>
<div class="t" style="left:816px;top:560px;width:79px;overflow:hidden;font-size:13px;line-height:16px;color:#000;">64407570</div>
<div class="t" style="left:999px;top:560px;width:79px;overflow:hidden;font-size:13px;line-height:16px;color:#000080;">ЭН461925</div>
<div class="t" style="left:1082px;top:560px;width:54px;overflow:hidden;font-size:13px;line-height:16px;color:#000080;letter-spacing:0.45px;">ГР</div>
<div class="t" style="left:1140px;top:560px;width:104px;overflow:hidden;font-size:13px;line-height:16px;color:#000080;letter-spacing:0.45px;">НОВОЛИПЕЦК</div>
<div class="t" style="left:1248px;top:560px;width:54px;overflow:hidden;font-size:13px;line-height:16px;color:#000080;">62300</div>
<div class="t" style="left:1306px;top:560px;width:138px;overflow:hidden;font-size:13px;line-height:16px;color:#000080;letter-spacing:0.45px;">ОАО.НОВОЛИПЕЦКИЙ</div>
<div style="position:absolute;left:784px;top:577px;width:111px;height:1px;background:#000"></div>
<div style="position:absolute;left:995px;top:577px;width:450px;height:1px;background:#4F5F4F"></div>
<div class="t" style="left:787px;top:579px;width:25px;overflow:hidden;font-size:13px;line-height:16px;color:#000;">5</div>
<div class="t" style="left:816px;top:579px;width:79px;overflow:hidden;font-size:13px;line-height:16px;color:#000;">65802084</div>
<div class="t" style="left:999px;top:579px;width:79px;overflow:hidden;font-size:13px;line-height:16px;color:#000080;">ЭН461925</div>
<div class="t" style="left:1082px;top:579px;width:54px;overflow:hidden;font-size:13px;line-height:16px;color:#000080;letter-spacing:0.45px;">ГР</div>
<div class="t" style="left:1140px;top:579px;width:104px;overflow:hidden;font-size:13px;line-height:16px;color:#000080;letter-spacing:0.45px;">НОВОЛИПЕЦК</div>
<div class="t" style="left:1248px;top:579px;width:54px;overflow:hidden;font-size:13px;line-height:16px;color:#000080;">67300</div>
<div class="t" style="left:1306px;top:579px;width:138px;overflow:hidden;font-size:13px;line-height:16px;color:#000080;letter-spacing:0.45px;">ОАО.НОВОЛИПЕЦКИЙ</div>
<div style="position:absolute;left:784px;top:596px;width:111px;height:1px;background:#000"></div>
<div style="position:absolute;left:995px;top:596px;width:450px;height:1px;background:#4F5F4F"></div>
<div class="t" style="left:787px;top:598px;width:25px;overflow:hidden;font-size:13px;line-height:16px;color:#000;">6</div>
<div class="t" style="left:816px;top:598px;width:79px;overflow:hidden;font-size:13px;line-height:16px;color:#000;">67302976</div>
<div class="t" style="left:999px;top:598px;width:79px;overflow:hidden;font-size:13px;line-height:16px;color:#000080;">ЭН461925</div>
<div class="t" style="left:1082px;top:598px;width:54px;overflow:hidden;font-size:13px;line-height:16px;color:#000080;letter-spacing:0.45px;">ГР</div>
<div class="t" style="left:1140px;top:598px;width:104px;overflow:hidden;font-size:13px;line-height:16px;color:#000080;letter-spacing:0.45px;">НОВОЛИПЕЦК</div>
<div class="t" style="left:1248px;top:598px;width:54px;overflow:hidden;font-size:13px;line-height:16px;color:#000080;">63000</div>
<div class="t" style="left:1306px;top:598px;width:138px;overflow:hidden;font-size:13px;line-height:16px;color:#000080;letter-spacing:0.45px;">ОАО.НОВОЛИПЕЦКИЙ</div>
<div style="position:absolute;left:784px;top:615px;width:111px;height:1px;background:#000"></div>
<div style="position:absolute;left:995px;top:615px;width:450px;height:1px;background:#4F5F4F"></div>
<div class="t" style="left:787px;top:617px;width:25px;overflow:hidden;font-size:13px;line-height:16px;color:#000;">7</div>
<div class="t" style="left:816px;top:617px;width:79px;overflow:hidden;font-size:13px;line-height:16px;color:#000;">60632775</div>
<div class="t" style="left:999px;top:617px;width:79px;overflow:hidden;font-size:13px;line-height:16px;color:#000080;">60869878</div>
<div class="t" style="left:1082px;top:617px;width:54px;overflow:hidden;font-size:13px;line-height:16px;color:#000080;letter-spacing:0.45px;">ВОтш</div>
<div class="t" style="left:1140px;top:617px;width:104px;overflow:hidden;font-size:13px;line-height:16px;color:#000080;letter-spacing:0.45px;">ОБНОРСКАЯ</div>
<div class="t" style="left:1248px;top:617px;width:54px;overflow:hidden;font-size:13px;line-height:16px;color:#000080;">63890</div>
<div class="t" style="left:1306px;top:617px;width:138px;overflow:hidden;font-size:13px;line-height:16px;color:#000080;letter-spacing:0.45px;">ОАО.ЗАВОД.РЕЗЕРВУАР</div>
<div style="position:absolute;left:784px;top:634px;width:111px;height:1px;background:#000"></div>
<div style="position:absolute;left:995px;top:634px;width:450px;height:1px;background:#4F5F4F"></div>
<div class="t" style="left:787px;top:636px;width:25px;overflow:hidden;font-size:13px;line-height:16px;color:#000;">8</div>
<div class="t" style="left:816px;top:636px;width:79px;overflow:hidden;font-size:13px;line-height:16px;color:#000;">61210589</div>
<div class="t" style="left:999px;top:636px;width:79px;overflow:hidden;font-size:13px;line-height:16px;color:#000080;">60869711</div>
<div class="t" style="left:1082px;top:636px;width:54px;overflow:hidden;font-size:13px;line-height:16px;color:#000080;letter-spacing:0.45px;">ВОтш</div>
<div class="t" style="left:1140px;top:636px;width:104px;overflow:hidden;font-size:13px;line-height:16px;color:#000080;letter-spacing:0.45px;">БАРНАУЛ</div>
<div class="t" style="left:1248px;top:636px;width:54px;overflow:hidden;font-size:13px;line-height:16px;color:#000080;">64530</div>
<div class="t" style="left:1306px;top:636px;width:138px;overflow:hidden;font-size:13px;line-height:16px;color:#000080;letter-spacing:0.45px;">ООО.ПКФ.".АЛТАЙ.-МЕТАЛЛ</div>
<div style="position:absolute;left:784px;top:653px;width:111px;height:1px;background:#000"></div>
<div style="position:absolute;left:995px;top:653px;width:450px;height:1px;background:#4F5F4F"></div>
<div class="t" style="left:787px;top:655px;width:25px;overflow:hidden;font-size:13px;line-height:16px;color:#000;">9</div>
<div class="t" style="left:816px;top:655px;width:79px;overflow:hidden;font-size:13px;line-height:16px;color:#000;">67424952</div>
<div class="t" style="left:999px;top:655px;width:79px;overflow:hidden;font-size:13px;line-height:16px;color:#000080;">60869712</div>
<div class="t" style="left:1082px;top:655px;width:54px;overflow:hidden;font-size:13px;line-height:16px;color:#000080;letter-spacing:0.45px;">ВОтш</div>
<div class="t" style="left:1140px;top:655px;width:104px;overflow:hidden;font-size:13px;line-height:16px;color:#000080;letter-spacing:0.45px;">БАРНАУЛ</div>
<div class="t" style="left:1248px;top:655px;width:54px;overflow:hidden;font-size:13px;line-height:16px;color:#000080;">64390</div>
<div class="t" style="left:1306px;top:655px;width:138px;overflow:hidden;font-size:13px;line-height:16px;color:#000080;letter-spacing:0.45px;">ЗАО.ПРОИЗВОДСТВЕННОЕ</div>
<div style="position:absolute;left:895px;top:615px;width:100px;height:1px;background:#4F5F4F"></div>
<div style="position:absolute;left:784px;top:672px;width:661px;height:1px;background:#000"></div>
<div style="position:absolute;left:784px;top:501px;width:661px;height:1px;background:#000"></div>
<div class="t" style="left:895px;top:551px;width:100px;text-align:center;font-size:13px;line-height:16px;color:#000080">8400 094 8000</div>
<div class="t" style="left:895px;top:637px;width:100px;text-align:center;font-size:13px;line-height:16px;color:#000080">8000 090 8400</div>
<div style="position:absolute;left:783px;top:483px;width:1px;height:190px;background:#000"></div>
<div style="position:absolute;left:812px;top:483px;width:1px;height:190px;background:#000"></div>
<div style="position:absolute;left:895px;top:483px;width:1px;height:190px;background:#000"></div>
<div style="position:absolute;left:995px;top:483px;width:1px;height:190px;background:#000"></div>
<div style="position:absolute;left:1078px;top:483px;width:1px;height:19px;background:#000"></div><div style="position:absolute;left:1078px;top:502px;width:1px;height:171px;background:#4F5F4F"></div>
<div style="position:absolute;left:1136px;top:483px;width:1px;height:19px;background:#000"></div><div style="position:absolute;left:1136px;top:502px;width:1px;height:171px;background:#4F5F4F"></div>
<div style="position:absolute;left:1244px;top:483px;width:1px;height:19px;background:#000"></div><div style="position:absolute;left:1244px;top:502px;width:1px;height:171px;background:#4F5F4F"></div>
<div style="position:absolute;left:1302px;top:483px;width:1px;height:19px;background:#000"></div><div style="position:absolute;left:1302px;top:502px;width:1px;height:171px;background:#4F5F4F"></div>
<div style="position:absolute;left:1444px;top:483px;width:1px;height:190px;background:#000"></div>
<div style="position:absolute;left:0;top:872px;width:1600px;height:28px;background:#D4D0C8;box-shadow:inset 0 1px #FFFFFF;"></div>
<div style="position:absolute;left:2px;top:875px;width:61px;height:23px;background:#D4D0C8;box-shadow:inset 1px 1px #FFFFFF,inset -1px -1px #404040,inset -2px -2px #808080;"></div>
<div style="position:absolute;left:5px;top:880px;width:5px;height:12px;background:repeating-linear-gradient(#FF0000 0 2px,#fff 2px 3px,#0000FF 3px 5px,#fff 5px 6px);"></div>
<svg style="position:absolute;left:9px;top:879px" width="14" height="16"><path d="M1 3 L6 1 L6 7 L1 8Z" fill="#FF0000" stroke="#000"/><path d="M7 1 L13 0 L13 6 L7 7Z" fill="#00C000" stroke="#000"/><path d="M1 9 L6 8 L6 14 L1 15Z" fill="#0000FF" stroke="#000"/><path d="M7 8 L13 7 L13 13 L7 14Z" fill="#FFFF00" stroke="#000"/></svg>
<div class="t" style="left:25px;top:877px;font:bold 14px/18px 'Liberation Sans',sans-serif;color:#000">Пуск</div>
<div style="position:absolute;left:66px;top:876px;width:1px;height:21px;background:#808080"></div><div style="position:absolute;left:67px;top:876px;width:1px;height:21px;background:#FFFFFF"></div>
<div style="position:absolute;left:70px;top:877px;width:3px;height:19px;box-shadow:inset 1px 1px #FFFFFF,inset -1px -1px #808080"></div>
<svg style="position:absolute;left:80px;top:878px" width="16" height="16"><rect x="0.5" y="4.5" width="15" height="9" fill="#FFFFE0" stroke="#000"/><rect x="11" y="6" width="2" height="2" fill="#E00000"/><path d="M3 5 A5 4 0 0 1 11 3" stroke="#3070E0" stroke-width="2" fill="none"/><path d="M5 14 A5 4 0 0 0 13 13" stroke="#3070E0" stroke-width="2" fill="none"/></svg>
<svg style="position:absolute;left:103px;top:878px" width="16" height="16"><ellipse cx="8" cy="9" rx="6" ry="5.5" fill="none" stroke="#1E6FE0" stroke-width="3"/><rect x="4" y="8" width="9" height="2" fill="#1E6FE0"/><path d="M1 14 Q4 2 15 2" stroke="#60A0F0" stroke-width="1.5" fill="none"/></svg>
<svg style="position:absolute;left:126px;top:878px" width="16" height="16"><rect x="0.5" y="2.5" width="15" height="13" fill="#3070C0" stroke="#000"/><circle cx="8" cy="9" r="6" fill="#E8E0C0"/><rect x="5" y="8" width="5" height="5" fill="#fff" stroke="#000"/><path d="M8 9 L14 1" stroke="#F0A000" stroke-width="2"/></svg>
<svg style="position:absolute;left:150px;top:878px" width="16" height="16"><rect x="0.5" y="0.5" width="14" height="15" fill="#fff" stroke="#000"/><rect x="0.5" y="0.5" width="14" height="3" fill="#000"/><text x="2" y="13" font-family="Liberation Sans" font-style="italic" font-weight="bold" font-size="10" fill="#000">12</text></svg>
<svg style="position:absolute;left:172px;top:878px" width="16" height="16"><rect x="0.5" y="3.5" width="15" height="10" rx="1" fill="#108080" stroke="#003030"/><rect x="3" y="5" width="8" height="2" fill="#C0FFFF"/><rect x="3" y="9" width="10" height="2" fill="#E0FFFF"/></svg>
<svg style="position:absolute;left:195px;top:878px" width="16" height="16"><path d="M1 3 L9 2 L9 5 L1 5Z" fill="#808080" stroke="#000" stroke-width="0.6"/><rect x="3" y="8" width="4" height="8" fill="#F0E040" stroke="#000" stroke-width="0.6"/><rect x="8" y="7" width="7" height="8" fill="#fff" stroke="#000"/><rect x="10" y="10" width="1" height="4" fill="#C00000"/><rect x="12" y="9" width="1" height="5" fill="#8000C0"/></svg>
<svg style="position:absolute;left:218px;top:878px" width="16" height="16"><rect x="0.5" y="1.5" width="13" height="11" fill="#E0E0E0" stroke="#404040"/><rect x="1" y="2" width="8" height="2" fill="#2040A0"/><circle cx="9" cy="9" r="4.5" fill="#C0E8F8" stroke="#408080"/><path d="M12 12 L15 15" stroke="#0060C0" stroke-width="2"/></svg>
<svg style="position:absolute;left:241px;top:878px" width="16" height="16"><circle cx="8" cy="8" r="7.5" fill="#1020A0"/><text x="0.5" y="10" font-family="Liberation Sans" font-weight="bold" font-size="6.5" fill="#fff" letter-spacing="-0.5">msdn</text><path d="M9 12 L15 11" stroke="#E00000" stroke-width="1.5"/></svg>
<svg style="position:absolute;left:264px;top:878px" width="16" height="16"><circle cx="4.5" cy="8" r="3.5" fill="none" stroke="#20A020" stroke-width="2.5"/><circle cx="11.5" cy="8" r="3.5" fill="none" stroke="#2040C0" stroke-width="2.5"/><path d="M4 11 L12 4" stroke="#E00000" stroke-width="2"/><rect x="2" y="5" width="2" height="2" fill="#F0F000"/></svg>
<svg style="position:absolute;left:287px;top:878px" width="16" height="16"><rect x="0.5" y="0.5" width="15" height="15" fill="#20D020" stroke="#E00000"/><path d="M2 8 L8 5 L14 8 L8 11Z" fill="#F0F040"/><rect x="2" y="2" width="12" height="4" fill="#2080D0" opacity="0.6"/><rect x="2" y="10" width="12" height="4" fill="#2080D0" opacity="0.6"/></svg>
<svg style="position:absolute;left:310px;top:878px" width="16" height="16"><path d="M1 10 L8 14 L15 10 L15 7 L8 11 L1 7Z" fill="#B0B0B0" stroke="#404040" stroke-width="0.6"/><circle cx="9" cy="6" r="5.5" fill="#40A040"/><circle cx="8" cy="6" r="4" fill="#2060E0"/><rect x="6" y="2" width="4" height="8" fill="#fff"/></svg>
<svg style="position:absolute;left:333px;top:878px" width="16" height="16"><path d="M1 9 L8 2 L15 6 L8 14Z" fill="#404040"/><path d="M3 12 L9 7 L7 7 L13 3 L8 9 L10 9Z" fill="#F0B040"/></svg>
<svg style="position:absolute;left:356px;top:878px" width="16" height="16"><rect x="1.5" y="1.5" width="12" height="14" fill="#fff" stroke="#000"/><path d="M4 5 H11 M4 7 H11 M4 9 H11 M4 11 H11" stroke="#000"/><path d="M2 1 H13" stroke="#000" stroke-dasharray="1,1"/></svg>
<svg style="position:absolute;left:379px;top:878px" width="16" height="16"><rect x="3.5" y="8.5" width="9" height="7" fill="#E0E0E0" stroke="#404040"/><path d="M5 8 L2 2 M8 8 L8 1 M10 8 L13 2" stroke="#C00000" stroke-width="1.6"/><path d="M7 8 L6 2" stroke="#20B0E0" stroke-width="1.5"/><path d="M9 8 L11 3" stroke="#F0D000" stroke-width="1.5"/></svg>
<div style="position:absolute;left:408px;top:876px;width:1px;height:21px;background:#808080"></div><div style="position:absolute;left:409px;top:876px;width:1px;height:21px;background:#FFFFFF"></div>
<div style="position:absolute;left:411px;top:877px;width:3px;height:19px;box-shadow:inset 1px 1px #FFFFFF,inset -1px -1px #808080"></div>
<div style="position:absolute;left:419px;top:875px;width:137px;height:23px;background:#D4D0C8;box-shadow:inset 1px 1px #FFFFFF,inset -1px -1px #404040,inset -2px -2px #808080;"></div>
<div class="t" style="left:440px;top:878px;font:14px/17px 'Liberation Sans',sans-serif;color:#000">Входящие - Mic...</div>
<svg style="position:absolute;left:423px;top:879px" width="16" height="16"><path d="M1 10 L8 14 L15 10 L15 7 L8 11 L1 7Z" fill="#B0B0B0" stroke="#404040" stroke-width="0.6"/><circle cx="9" cy="6" r="5.5" fill="#40A040"/><circle cx="8" cy="6" r="4" fill="#2060E0"/><rect x="6" y="2" width="4" height="8" fill="#fff"/></svg>
<div style="position:absolute;left:559px;top:875px;width:137px;height:23px;background:#D4D0C8;box-shadow:inset 1px 1px #FFFFFF,inset -1px -1px #404040,inset -2px -2px #808080;"></div>
<div class="t" style="left:580px;top:878px;font:14px/17px 'Liberation Sans',sans-serif;color:#000">SQL Query Anal...</div>
<svg style="position:absolute;left:563px;top:879px" width="16" height="16"><rect x="0.5" y="1.5" width="13" height="11" fill="#E0E0E0" stroke="#404040"/><rect x="1" y="2" width="8" height="2" fill="#2040A0"/><circle cx="9" cy="9" r="4.5" fill="#C0E8F8" stroke="#408080"/><path d="M12 12 L15 15" stroke="#0060C0" stroke-width="2"/></svg>
<div style="position:absolute;left:700px;top:875px;width:137px;height:23px;background:#D4D0C8;box-shadow:inset 1px 1px #FFFFFF,inset -1px -1px #404040,inset -2px -2px #808080;"></div>
<div class="t" style="left:721px;top:878px;font:14px/17px 'Liberation Sans',sans-serif;color:#000">spr_cont - Micro...</div>
<svg style="position:absolute;left:704px;top:879px" width="16" height="16"><circle cx="4.5" cy="8" r="3.5" fill="none" stroke="#20A020" stroke-width="2.5"/><circle cx="11.5" cy="8" r="3.5" fill="none" stroke="#2040C0" stroke-width="2.5"/><path d="M4 11 L12 4" stroke="#E00000" stroke-width="2"/><rect x="2" y="5" width="2" height="2" fill="#F0F000"/></svg>
<div style="position:absolute;left:841px;top:875px;width:138px;height:23px;background:#D4D0C8;box-shadow:inset 1px 1px #FFFFFF,inset -1px -1px #404040,inset -2px -2px #808080;"></div>
<div class="t" style="left:862px;top:878px;font:14px/17px 'Liberation Sans',sans-serif;color:#000">SQL Server Ente...</div>
<svg style="position:absolute;left:845px;top:879px" width="16" height="16"><path d="M1 3 L9 2 L9 5 L1 5Z" fill="#808080" stroke="#000" stroke-width="0.6"/><rect x="3" y="8" width="4" height="8" fill="#F0E040" stroke="#000" stroke-width="0.6"/><rect x="8" y="7" width="7" height="8" fill="#fff" stroke="#000"/><rect x="10" y="10" width="1" height="4" fill="#C00000"/><rect x="12" y="9" width="1" height="5" fill="#8000C0"/></svg>
<div style="position:absolute;left:982px;top:875px;width:137px;height:23px;background:repeating-conic-gradient(#FFFFFF 0% 25%, #D4D0C8 0% 50%) 0 0/2px 2px;box-shadow:inset 1px 1px #404040,inset -1px -1px #FFFFFF,inset 2px 2px #808080;"></div>
<div class="t" style="left:1004px;top:878px;font:bold 14px/17px 'Liberation Sans',sans-serif;color:#000">справочная с...</div>
<svg style="position:absolute;left:986px;top:879px" width="16" height="16"><rect x="0.5" y="0.5" width="15" height="15" fill="#40E0F0" stroke="#800080"/><rect x="3" y="5" width="9" height="5" fill="#0000FF"/><rect x="9" y="2" width="3" height="4" fill="#0000FF"/><circle cx="5" cy="11" r="2" fill="#008000"/><circle cx="11" cy="11" r="2.5" fill="#008000"/><rect x="1" y="13" width="14" height="1" fill="#FFFF00"/></svg>
<div style="position:absolute;left:1123px;top:875px;width:137px;height:23px;background:#D4D0C8;box-shadow:inset 1px 1px #FFFFFF,inset -1px -1px #404040,inset -2px -2px #808080;"></div>
<div class="t" style="left:1144px;top:878px;font:14px/17px 'Liberation Sans',sans-serif;color:#000">Новая папка</div>
<svg style="position:absolute;left:1127px;top:879px" width="16" height="16"><path d="M0.5 4.5 H6 L7 3 H12 V5 H15.5 V14.5 H0.5Z" fill="#F0E080" stroke="#806000"/><path d="M2.5 7.5 H15.5 L14 14.5 H0.5Z" fill="#FFF0A0" stroke="#806000"/></svg>
<div style="position:absolute;left:1416px;top:875px;width:182px;height:23px;box-shadow:inset 1px 1px #808080,inset -1px -1px #FFFFFF;"></div>
<svg style="position:absolute;left:1421px;top:878px" width="16" height="16"><text x="0" y="12" font-family="Liberation Serif" font-weight="bold" font-size="12" fill="#0000E0">R</text><rect x="8" y="1" width="6" height="12" fill="#404040"/><rect x="9" y="2" width="4" height="3" fill="#40C0C0"/><rect x="6" y="6" width="5" height="4" fill="#2060E0"/><rect x="6" y="13" width="8" height="2" fill="#808080"/></svg>
<svg style="position:absolute;left:1438px;top:878px" width="16" height="16"><path d="M1 9 L8 2 L15 6 L8 14Z" fill="#404040"/><path d="M3 12 L9 7 L7 7 L13 3 L8 9 L10 9Z" fill="#F0B040"/></svg>
<svg style="position:absolute;left:1455px;top:878px" width="16" height="16"><path d="M1 6 H4 L9 1 V15 L4 10 H1Z" fill="#F0F000" stroke="#000"/><path d="M11 5 L14 3 M11 8 H15 M11 11 L14 13" stroke="#A0A0A0"/></svg>
<svg style="position:absolute;left:1474px;top:878px" width="16" height="16"><rect x="1.5" y="0.5" width="8" height="14" fill="#E0E0E0" stroke="#404040"/><circle cx="11" cy="11" r="4.5" fill="#fff" stroke="#000"/><path d="M10 8 L13 11 L10 14Z" fill="#008000"/></svg>
<svg style="position:absolute;left:1492px;top:878px" width="16" height="16"><rect x="0.5" y="3.5" width="9" height="8" fill="#202020" stroke="#000"/><rect x="6.5" y="1.5" width="8" height="8" fill="#404040" stroke="#000"/><rect x="0" y="12" width="11" height="3" fill="#808080"/></svg>
<svg style="position:absolute;left:1510px;top:878px" width="16" height="16"><rect x="3.5" y="6.5" width="12" height="8" fill="#fff" stroke="#000"/><path d="M6 10 H13 M6 12 H13" stroke="#0000E0"/><rect x="13" y="7" width="2" height="2" fill="#E00000"/><path d="M4 0 V8 M0 4 H8 M1 1 L7 7 M7 1 L1 7" stroke="#F0F000"/></svg>
<div class="t" style="left:1546px;top:880px;font:14px/17px 'Liberation Sans',sans-serif;color:#000">10:29</div>
</body></html>
